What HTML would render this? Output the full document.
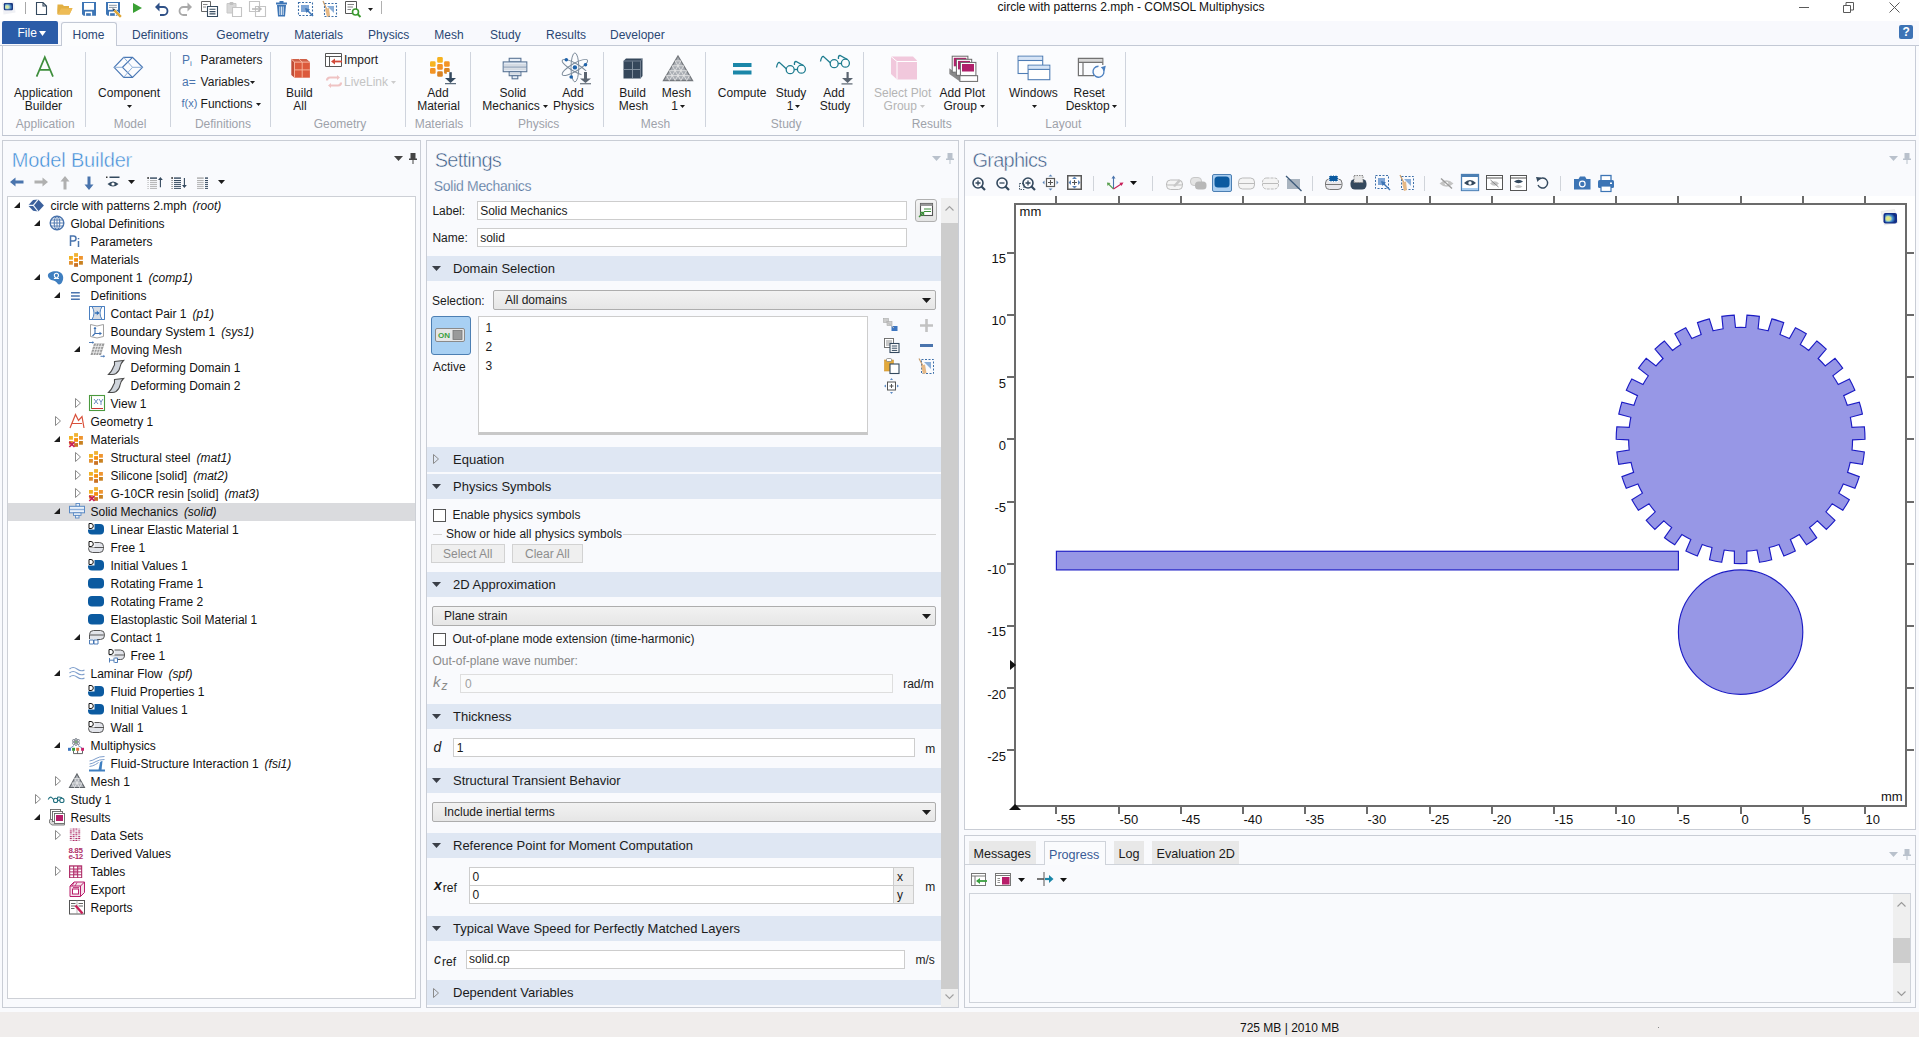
<!DOCTYPE html><html><head><meta charset="utf-8"><style>
html,body{margin:0;padding:0;width:1919px;height:1037px;overflow:hidden;background:#f9fafd;position:relative}
.t{position:absolute;white-space:nowrap;font-family:"Liberation Sans",sans-serif;line-height:1}
svg{overflow:visible}
</style></head><body><div style="position:absolute;left:0px;top:0px;width:1919px;height:21px;background:#ffffff"></div>
<div style="position:absolute;left:0px;top:21px;width:1919px;height:24px;background:#f8f9fd"></div>
<div style="position:absolute;left:0px;top:45px;width:1919px;height:1px;background:#c3c9d5"></div>
<div style="position:absolute;left:0px;top:46px;width:1919px;height:89px;background:#fbfcfe"></div>
<div style="position:absolute;left:2px;top:45px;width:1px;height:90px;background:#c8cdd8"></div>
<div style="position:absolute;left:1915px;top:45px;width:1px;height:90px;background:#c8cdd8"></div>
<div style="position:absolute;left:2px;top:135px;width:1914px;height:1px;background:#bfc5d1"></div>
<div style="position:absolute;left:0px;top:136px;width:1919px;height:876px;background:#f9fafd"></div>
<div style="position:absolute;left:0px;top:1012px;width:1919px;height:25px;background:#f0edec"></div>
<div style="position:absolute;left:2px;top:140px;width:419px;height:868px;background:#f9fafd;border:1px solid #c9cdd5;box-sizing:border-box"></div>
<div style="position:absolute;left:426px;top:140px;width:533px;height:868px;background:#f9fafd;border:1px solid #c9cdd5;box-sizing:border-box"></div>
<div style="position:absolute;left:964px;top:140px;width:952px;height:690px;background:#f9fafd;border:1px solid #c9cdd5;box-sizing:border-box"></div>
<div style="position:absolute;left:964px;top:835px;width:952px;height:173px;background:#f9fafd;border:1px solid #c9cdd5;box-sizing:border-box"></div>
<svg style="position:absolute;left:0px;top:0px;" width="17" height="17" viewBox="0 0 17 17"><path d="M2 2.5L14 1.5L15.5 12.5L3.5 14.5Z" fill="#eceef2" opacity="0.8"/><defs><radialGradient id="lg1" cx="0.3" cy="0.55" r="0.75"><stop offset="0" stop-color="#f2ec8a"/><stop offset="0.35" stop-color="#b9dcc0"/><stop offset="0.65" stop-color="#4e8cc6"/><stop offset="1" stop-color="#1a3c82"/></radialGradient></defs><rect x="3.8" y="3" width="9.2" height="7.2" rx="1.2" fill="#1c3a80"/><rect x="5" y="3.8" width="7.2" height="5.8" rx="0.8" fill="url(#lg1)"/></svg>
<div style="position:absolute;left:25px;top:2px;width:1px;height:12px;background:#a8a8a8"></div>
<svg style="position:absolute;left:35px;top:1px;" width="13" height="15" viewBox="0 0 13 15"><path d="M1.5 1.5H8L11.5 5V13.5H1.5Z M8 1.5V5H11.5" fill="#fff" stroke="#34495e" stroke-width="1.1"/></svg>
<svg style="position:absolute;left:57px;top:3px;" width="16" height="13" viewBox="0 0 16 13"><path d="M0.5 2V11.5H12.5L15.5 5H4L1.5 11" fill="#e3b043"/><path d="M0.5 11V1.5H5.5L7 3H12V5" fill="#e3b043" stroke="#d9a136" stroke-width="0"/><path d="M1 11.5L4 5.5H15.5L12.5 11.5Z" fill="#eebc56"/></svg>
<svg style="position:absolute;left:82px;top:2px;" width="14" height="14" viewBox="0 0 14 14"><path d="M0 0H14V13.8H1.6L0 12.2Z" fill="#3d75b5"/><rect x="2" y="1" width="10" height="6.8" fill="#fff"/><rect x="3" y="9.6" width="7.1" height="4.2" fill="#fff"/><rect x="4.1" y="11.2" width="4.7" height="2.6" fill="#3d75b5"/></svg>
<svg style="position:absolute;left:106px;top:2px;" width="16" height="16" viewBox="0 0 16 16"><path d="M0 0H14V13.8H1.6L0 12.2Z" fill="#3d75b5"/><rect x="2" y="1" width="10" height="6.8" fill="#fff"/><rect x="3" y="9.6" width="7.1" height="4.2" fill="#fff"/><rect x="4.1" y="11.2" width="4.7" height="2.6" fill="#3d75b5"/><path d="M3 3.3H10.8M3 5.4H10.8" stroke="#7a8a9a" stroke-width="0.9"/><path d="M9.3 7.3L16 14L14 16L7.3 9.3Z" fill="#e0a83a" stroke="#fff" stroke-width="0.5"/><path d="M6.3 6.3L9.3 7.3L7.3 9.3Z" fill="#34495e"/></svg>
<svg style="position:absolute;left:133px;top:3px;" width="10" height="10" viewBox="0 0 10 10"><path d="M0 0L9 5L0 10Z" fill="#3aa034"/></svg>
<svg style="position:absolute;left:155px;top:2px;" width="14" height="13" viewBox="0 0 14 13"><path d="M3 5H8.5A4 4 0 0 1 8.5 13H5" fill="none" stroke="#2f5187" stroke-width="1.8"/><path d="M0 5L4.5 0.5V9.5Z" fill="#2f5187"/></svg>
<svg style="position:absolute;left:178px;top:2px;" width="14" height="13" viewBox="0 0 14 13"><path d="M11 5H5.5A4 4 0 0 0 5.5 13H9" fill="none" stroke="#a9a9a9" stroke-width="1.8"/><path d="M14 5L9.5 0.5V9.5Z" fill="#a9a9a9"/></svg>
<svg style="position:absolute;left:201px;top:1px;" width="17" height="16" viewBox="0 0 17 16"><path d="M0.5 0.5H9.5V10.5H0.5Z" fill="#fff" stroke="#666" stroke-width="1"/><path d="M2 3.5H6.5M2 6H5" stroke="#777" stroke-width="0.9"/><path d="M6.5 5.5H16.5V15.5H6.5Z" fill="#fff" stroke="#34495e" stroke-width="1.1"/><path d="M8.5 8.3H14.5M8.5 10.6H14.5M8.5 12.9H14.5" stroke="#34495e" stroke-width="1.1"/></svg>
<svg style="position:absolute;left:226px;top:1px;" width="16" height="16" viewBox="0 0 16 16"><path d="M1 2.5H10V12H1Z" fill="#d8d8d8" stroke="#c8c8c8"/><rect x="3.5" y="1" width="4" height="3" rx="1" fill="#c0c0c0"/><path d="M6.5 6.5H15.5V15.5H6.5Z" fill="#fff" stroke="#c4c4c4" stroke-width="1.1"/></svg>
<svg style="position:absolute;left:249px;top:1px;" width="17" height="16" viewBox="0 0 17 16"><path d="M0.5 0.5H10.5V10.5H0.5Z M6.5 5.5H16.5V15.5H6.5Z" fill="none" stroke="#c4c4c4" stroke-width="1.1"/><path d="M3 8H11M9 5.5L12 8L9 10.5" fill="none" stroke="#b8b8b8" stroke-width="1.5"/></svg>
<svg style="position:absolute;left:276px;top:1px;" width="11" height="16" viewBox="0 0 11 16"><rect x="0" y="1.5" width="11" height="2" fill="#3d75b5"/><rect x="3.5" y="0" width="4" height="2" fill="#3d75b5"/><path d="M1 4H10L9 15.5H2Z" fill="#3d75b5"/><path d="M3.8 5.5V14M5.5 5.5V14M7.2 5.5V14" stroke="#fff" stroke-width="0.8"/></svg>
<svg style="position:absolute;left:298px;top:2px;" width="16" height="15" viewBox="0 0 16 15"><path d="M0.5 0.5H14.5V13.5H0.5Z" fill="none" stroke="#3d6fa8" stroke-width="1.1" stroke-dasharray="2 1.5"/><rect x="3" y="3" width="8" height="7" fill="#7fa6d6"/><path d="M8 7L15 14" stroke="#3d75b5" stroke-width="1.6"/><path d="M7 6L12 7.5L8.5 11Z" fill="#3d75b5"/></svg>
<svg style="position:absolute;left:322px;top:1px;" width="15" height="16" viewBox="0 0 15 16"><path d="M2.5 2.5H14.5V15.5H2.5Z" fill="none" stroke="#3d6fa8" stroke-width="1.1" stroke-dasharray="2 1.5"/><path d="M5 5H12V12Z" fill="#8aaed8"/><path d="M1 0L5 9" stroke="#c89c6a" stroke-width="1.2"/><path d="M3 8L7 7L8 15L5 16Z" fill="#e6b884"/></svg>
<svg style="position:absolute;left:345px;top:1px;" width="16" height="17" viewBox="0 0 16 17"><path d="M0.5 0.5H11.5V12.5H0.5Z" fill="#fff" stroke="#555" stroke-width="1"/><path d="M2.5 3.5H9M2.5 6H8M2.5 8.5H6" stroke="#777" stroke-width="0.9"/><circle cx="10.5" cy="11" r="3" fill="#fff" stroke="#3a9a2f" stroke-width="1.6"/><path d="M12.5 13L15.5 16" stroke="#3a9a2f" stroke-width="2"/></svg>
<svg style="position:absolute;left:368.0px;top:7.5px;" width="5" height="3" viewBox="0 0 5 3"><path d="M0 0H5L2.5 3Z" fill="#1b1b1b"/></svg>
<div style="position:absolute;left:381px;top:1px;width:1px;height:13px;background:#b0b0b0"></div>
<div class="t" style="left:997.5px;top:1px;font-size:12px;color:#111;">circle with patterns 2.mph - COMSOL Multiphysics</div>
<div style="position:absolute;left:1799px;top:7px;width:10px;height:1px;background:#5a5a5a"></div>
<svg style="position:absolute;left:1843px;top:2px;" width="11" height="11" viewBox="0 0 11 11"><path d="M0.5 3.5H7.5V10.5H0.5Z M3 3.5V0.5H10.5V8H7.5" fill="none" stroke="#5a5a5a" stroke-width="1"/></svg>
<svg style="position:absolute;left:1889px;top:2px;" width="11" height="11" viewBox="0 0 11 11"><path d="M0.5 0.5L10.5 10.5M10.5 0.5L0.5 10.5" stroke="#5a5a5a" stroke-width="1"/></svg>
<div style="position:absolute;left:2px;top:21px;width:56px;height:23px;background:#2b5ca8;border-radius:2px 2px 0 0"></div>
<div class="t" style="left:17.5px;top:27px;font-size:12px;color:#ffffff;">File</div>
<svg style="position:absolute;left:39px;top:31px;" width="7" height="5" viewBox="0 0 7 5"><path d="M0 0H7L3.5 5Z" fill="#fff"/></svg>
<div style="position:absolute;left:61px;top:22px;width:56px;height:24px;background:#fcfdfe;border:1px solid #c3c9d5;border-bottom:none;border-radius:3px 3px 0 0;box-sizing:border-box"></div>
<div class="t" style="left:72.5px;top:29px;font-size:12px;color:#2a4774;">Home</div>
<div class="t" style="left:132px;top:29px;font-size:12px;color:#2a4774;">Definitions</div>
<div class="t" style="left:216.3px;top:29px;font-size:12px;color:#2a4774;">Geometry</div>
<div class="t" style="left:294.3px;top:29px;font-size:12px;color:#2a4774;">Materials</div>
<div class="t" style="left:368px;top:29px;font-size:12px;color:#2a4774;">Physics</div>
<div class="t" style="left:434.3px;top:29px;font-size:12px;color:#2a4774;">Mesh</div>
<div class="t" style="left:490px;top:29px;font-size:12px;color:#2a4774;">Study</div>
<div class="t" style="left:546px;top:29px;font-size:12px;color:#2a4774;">Results</div>
<div class="t" style="left:610px;top:29px;font-size:12px;color:#2a4774;">Developer</div>
<div style="position:absolute;left:1899px;top:25px;width:14px;height:14px;background:#3d73b5;border-radius:2px"></div>
<div class="t" style="left:1902.5px;top:26px;font-size:12px;color:#fff;font-weight:bold">?</div>
<div style="position:absolute;left:85px;top:52px;width:1px;height:75px;background:#cfd4dd"></div>
<div style="position:absolute;left:170px;top:52px;width:1px;height:75px;background:#cfd4dd"></div>
<div style="position:absolute;left:270px;top:52px;width:1px;height:75px;background:#cfd4dd"></div>
<div style="position:absolute;left:405px;top:52px;width:1px;height:75px;background:#cfd4dd"></div>
<div style="position:absolute;left:470px;top:52px;width:1px;height:75px;background:#cfd4dd"></div>
<div style="position:absolute;left:603px;top:52px;width:1px;height:75px;background:#cfd4dd"></div>
<div style="position:absolute;left:705px;top:52px;width:1px;height:75px;background:#cfd4dd"></div>
<div style="position:absolute;left:863px;top:52px;width:1px;height:75px;background:#cfd4dd"></div>
<div style="position:absolute;left:997px;top:52px;width:1px;height:75px;background:#cfd4dd"></div>
<div style="position:absolute;left:1125px;top:52px;width:1px;height:75px;background:#cfd4dd"></div>
<div class="t" style="left:-104.8px;width:300px;text-align:center;top:118px;font-size:12px;color:#9ea2aa">Application</div>
<div class="t" style="left:-20px;width:300px;text-align:center;top:118px;font-size:12px;color:#9ea2aa">Model</div>
<div class="t" style="left:72.9px;width:300px;text-align:center;top:118px;font-size:12px;color:#9ea2aa">Definitions</div>
<div class="t" style="left:190px;width:300px;text-align:center;top:118px;font-size:12px;color:#9ea2aa">Geometry</div>
<div class="t" style="left:289px;width:300px;text-align:center;top:118px;font-size:12px;color:#9ea2aa">Materials</div>
<div class="t" style="left:388.70000000000005px;width:300px;text-align:center;top:118px;font-size:12px;color:#9ea2aa">Physics</div>
<div class="t" style="left:505.5px;width:300px;text-align:center;top:118px;font-size:12px;color:#9ea2aa">Mesh</div>
<div class="t" style="left:636.2px;width:300px;text-align:center;top:118px;font-size:12px;color:#9ea2aa">Study</div>
<div class="t" style="left:781.7px;width:300px;text-align:center;top:118px;font-size:12px;color:#9ea2aa">Results</div>
<div class="t" style="left:913.3px;width:300px;text-align:center;top:118px;font-size:12px;color:#9ea2aa">Layout</div>
<div class="t" style="left:-106.6px;width:300px;text-align:center;top:87px;font-size:12px;color:#1b1b1b">Application</div>
<div class="t" style="left:-106.6px;width:300px;text-align:center;top:100px;font-size:12px;color:#1b1b1b">Builder</div>
<div class="t" style="left:-20.900000000000006px;width:300px;text-align:center;top:87px;font-size:12px;color:#1b1b1b">Component</div>
<svg style="position:absolute;left:126.6px;top:104.8px;" width="5" height="3" viewBox="0 0 5 3"><path d="M0 0H5L2.5 3Z" fill="#1b1b1b"/></svg>
<div class="t" style="left:149.39999999999998px;width:300px;text-align:center;top:87px;font-size:12px;color:#1b1b1b">Build</div>
<div class="t" style="left:150px;width:300px;text-align:center;top:100px;font-size:12px;color:#1b1b1b">All</div>
<div class="t" style="left:287.9px;width:300px;text-align:center;top:87px;font-size:12px;color:#1b1b1b">Add</div>
<div class="t" style="left:288.5px;width:300px;text-align:center;top:100px;font-size:12px;color:#1b1b1b">Material</div>
<div class="t" style="left:362.9px;width:300px;text-align:center;top:87px;font-size:12px;color:#1b1b1b">Solid</div>
<div class="t" style="left:482.3px;top:100px;font-size:12px;color:#1b1b1b;">Mechanics</div>
<svg style="position:absolute;left:542.5px;top:105.0px;" width="5" height="3" viewBox="0 0 5 3"><path d="M0 0H5L2.5 3Z" fill="#1b1b1b"/></svg>
<div class="t" style="left:423px;width:300px;text-align:center;top:87px;font-size:12px;color:#1b1b1b">Add</div>
<div class="t" style="left:423.6px;width:300px;text-align:center;top:100px;font-size:12px;color:#1b1b1b">Physics</div>
<div class="t" style="left:482.5px;width:300px;text-align:center;top:87px;font-size:12px;color:#1b1b1b">Build</div>
<div class="t" style="left:483.4px;width:300px;text-align:center;top:100px;font-size:12px;color:#1b1b1b">Mesh</div>
<div class="t" style="left:526.5px;width:300px;text-align:center;top:87px;font-size:12px;color:#1b1b1b">Mesh</div>
<div class="t" style="left:671.2px;top:100px;font-size:12px;color:#1b1b1b;">1</div>
<svg style="position:absolute;left:680.0px;top:105.0px;" width="5" height="3" viewBox="0 0 5 3"><path d="M0 0H5L2.5 3Z" fill="#1b1b1b"/></svg>
<div class="t" style="left:592.2px;width:300px;text-align:center;top:87px;font-size:12px;color:#1b1b1b">Compute</div>
<div class="t" style="left:641px;width:300px;text-align:center;top:87px;font-size:12px;color:#1b1b1b">Study</div>
<div class="t" style="left:786.8px;top:100px;font-size:12px;color:#1b1b1b;">1</div>
<svg style="position:absolute;left:795.0px;top:105.0px;" width="5" height="3" viewBox="0 0 5 3"><path d="M0 0H5L2.5 3Z" fill="#1b1b1b"/></svg>
<div class="t" style="left:684px;width:300px;text-align:center;top:87px;font-size:12px;color:#1b1b1b">Add</div>
<div class="t" style="left:685px;width:300px;text-align:center;top:100px;font-size:12px;color:#1b1b1b">Study</div>
<div class="t" style="left:752.7px;width:300px;text-align:center;top:87px;font-size:12px;color:#b4b4b4">Select Plot</div>
<div class="t" style="left:883.6px;top:100px;font-size:12px;color:#b4b4b4;">Group</div>
<svg style="position:absolute;left:919.9px;top:105.0px;" width="5" height="3" viewBox="0 0 5 3"><path d="M0 0H5L2.5 3Z" fill="#c8c8c8"/></svg>
<div class="t" style="left:812.3px;width:300px;text-align:center;top:87px;font-size:12px;color:#1b1b1b">Add Plot</div>
<div class="t" style="left:943.5px;top:100px;font-size:12px;color:#1b1b1b;">Group</div>
<svg style="position:absolute;left:980.1px;top:105.0px;" width="5" height="3" viewBox="0 0 5 3"><path d="M0 0H5L2.5 3Z" fill="#1b1b1b"/></svg>
<div class="t" style="left:883.4000000000001px;width:300px;text-align:center;top:87px;font-size:12px;color:#1b1b1b">Windows</div>
<svg style="position:absolute;left:1031.9px;top:105.0px;" width="5" height="3" viewBox="0 0 5 3"><path d="M0 0H5L2.5 3Z" fill="#1b1b1b"/></svg>
<div class="t" style="left:939.3px;width:300px;text-align:center;top:87px;font-size:12px;color:#1b1b1b">Reset</div>
<div class="t" style="left:1065.7px;top:100px;font-size:12px;color:#1b1b1b;">Desktop</div>
<svg style="position:absolute;left:1112.1px;top:105.0px;" width="5" height="3" viewBox="0 0 5 3"><path d="M0 0H5L2.5 3Z" fill="#1b1b1b"/></svg>
<div class="t" style="left:200.6px;top:54px;font-size:12px;color:#1b1b1b;">Parameters</div>
<div class="t" style="left:200.6px;top:76px;font-size:12px;color:#1b1b1b;">Variables</div>
<svg style="position:absolute;left:249.9px;top:80.5px;" width="5" height="3" viewBox="0 0 5 3"><path d="M0 0H5L2.5 3Z" fill="#1b1b1b"/></svg>
<div class="t" style="left:200.6px;top:98px;font-size:12px;color:#1b1b1b;">Functions</div>
<svg style="position:absolute;left:256.0px;top:102.5px;" width="5" height="3" viewBox="0 0 5 3"><path d="M0 0H5L2.5 3Z" fill="#1b1b1b"/></svg>
<div class="t" style="left:344px;top:54px;font-size:12px;color:#1b1b1b;">Import</div>
<div class="t" style="left:344px;top:76px;font-size:12px;color:#c4c4c4;">LiveLink</div>
<svg style="position:absolute;left:390.5px;top:80.5px;" width="5" height="3" viewBox="0 0 5 3"><path d="M0 0H5L2.5 3Z" fill="#cccccc"/></svg>
<svg style="position:absolute;left:30px;top:52px;" width="30" height="30" viewBox="0 0 30 30"><path d="M6.6 24.6L14.8 5.2L23 24.6M9.4 17.8H20.3" fill="none" stroke="#3e8e3c" stroke-width="1.7"/></svg>
<svg style="position:absolute;left:110px;top:52px;" width="36" height="30" viewBox="0 0 36 30"><g fill="none" stroke="#4a78b5" stroke-width="1.2"><path d="M4.1 15.3L13.7 5.3H22.5L32.5 15.3L22.5 25.3H13.7Z"/><path d="M22.5 5.3L12.5 15.3L22.5 25.3"/></g><g fill="none" stroke="#8fb0d8" stroke-width="1"><path d="M13.7 5.3L22.5 15.3L13.7 25.3M4.1 15.3H12.5M22.5 15.3H32.5"/></g></svg>
<div class="t" style="left:182px;top:54px;font-size:12px;color:#4a74ad;">P<sub style="font-size:8px;vertical-align:-2px">i</sub></div>
<div class="t" style="left:182px;top:76px;font-size:12px;color:#4a74ad;">a=</div>
<div class="t" style="left:181.5px;top:98px;font-size:11px;color:#4a74ad;">f(x)</div>
<svg style="position:absolute;left:290px;top:58px;" width="21" height="21" viewBox="0 0 21 21"><path d="M1.3 1H16.5L19.9 4.1H4.5Z" fill="#d06048"/><path d="M1.3 1L4.5 4.1V19.7L1.3 17Z" fill="#c04e38"/><rect x="4.5" y="4.1" width="15.4" height="15.6" fill="#dc5a3c"/><path d="M4.5 4.1H19.9M12.2 4.1V19.7M4.5 11.9H19.9M4.5 4.1V19.7M8.9 1L12.2 4.1M1.3 1L4.5 4.1" stroke="#f8b8a0" stroke-width="0.9" fill="none"/></svg>
<svg style="position:absolute;left:325px;top:53px;" width="18" height="14" viewBox="0 0 18 14"><path d="M0.5 0.5H16.5V13.5H0.5Z M0.5 3.5H16.5 M4.5 3.5V13.5" fill="#fff" stroke="#555" stroke-width="1"/><path d="M8 8.5H17" stroke="#d24a3a" stroke-width="1.8"/><path d="M6 8.5L10 5.5V11.5Z" fill="#d24a3a"/></svg>
<svg style="position:absolute;left:325px;top:75px;" width="18" height="13" viewBox="0 0 18 13"><path d="M2 5.5A3 3 0 0 1 5 2.5H13M16 7.5A3 3 0 0 1 13 10.5H5" fill="none" stroke="#efc3c3" stroke-width="2.2"/><path d="M12 0L15 2.5L12 5Z M6 8L3 10.5L6 13Z" fill="#efc3c3"/></svg>
<svg style="position:absolute;left:429px;top:56px;" width="31" height="29" viewBox="0 0 31 29"><rect x="8.2" y="1.1" width="5.6" height="5.6" rx="1.3" fill="#f6b21e"/><rect x="1" y="5.2" width="5.6" height="5.6" rx="1.3" fill="#f6b420"/><rect x="15.1" y="5.2" width="5.6" height="5.6" rx="1.3" fill="#f39425"/><rect x="8.2" y="8.1" width="5.6" height="5.6" rx="1.3" fill="#f39024"/><rect x="1" y="12.1" width="5.6" height="5.6" rx="1.3" fill="#f39424"/><rect x="15.1" y="12.1" width="5.6" height="5.6" rx="1.3" fill="#dc8420"/><rect x="8.2" y="15.2" width="5.6" height="5.6" rx="1.3" fill="#d98222"/><path d="M20.2 16H17.8V27H31V16Z" fill="#fbfcfe"/><rect x="20.3" y="16.2" width="2.5" height="7" fill="#34495e"/><path d="M16 22H27L21.5 27Z" fill="#34495e"/><rect x="16" y="27.2" width="11" height="1" fill="#34495e"/></svg>
<svg style="position:absolute;left:502px;top:57px;" width="26" height="23" viewBox="0 0 26 23"><g stroke="#5a7495" stroke-width="1.1" fill="#e8eff8"><rect x="7.2" y="1.3" width="11.7" height="3.6"/><rect x="1.2" y="4.9" width="23.6" height="9.8"/><rect x="7.2" y="14.7" width="11.7" height="4"/><rect x="10.1" y="18.7" width="5.7" height="3.1"/></g><rect x="1.8" y="6.8" width="22.4" height="2.2" fill="#d5dbe3"/><rect x="1.8" y="9.3" width="22.4" height="1.6" fill="#a3b1c2"/><rect x="1.8" y="11.2" width="22.4" height="2" fill="#d5dbe3"/><rect x="7.8" y="15.8" width="10.5" height="1.8" fill="#d5dbe3"/></svg>
<svg style="position:absolute;left:560px;top:52px;" width="33" height="33" viewBox="0 0 33 33"><g fill="none" stroke="#7d8c9c" stroke-width="1"><ellipse cx="14.9" cy="15.4" rx="3.9" ry="14.5"/><ellipse cx="14.9" cy="15.4" rx="3.9" ry="14.5" transform="rotate(60 14.9 15.4)"/><ellipse cx="14.9" cy="15.4" rx="3.9" ry="14.5" transform="rotate(-60 14.9 15.4)"/></g><circle cx="14.9" cy="15.4" r="2.2" fill="#1f63aa"/><circle cx="6.3" cy="7.8" r="1.8" fill="#1f63aa"/><circle cx="25.5" cy="12.8" r="1.8" fill="#1f63aa"/><circle cx="11.2" cy="25" r="1.8" fill="#1f63aa"/><path d="M22.5 19H31.5V32H19Z" fill="#fbfcfe"/><rect x="24" y="20" width="3" height="7" fill="#5a6470"/><path d="M20 26.5H31L25.5 31Z" fill="#5a6470"/><rect x="20" y="31.2" width="11" height="1.1" fill="#5a6470"/></svg>
<svg style="position:absolute;left:623px;top:58px;" width="21" height="21" viewBox="0 0 21 21"><path d="M3 0.5H19.5V18L17.5 20.5H0.5V3Z" fill="#35475b"/><path d="M0.5 3H17.5V20.5 M17.5 3L19.5 0.5" fill="none" stroke="#8a97a6" stroke-width="0.7"/><path d="M1 11.5H17M9.5 3.5V20" stroke="#8a97a6" stroke-width="0.9"/></svg>
<svg style="position:absolute;left:663px;top:55px;" width="30" height="27" viewBox="0 0 30 27"><path d="M15 1L29.5 25.5H0.5Z" fill="#a9adb3" stroke="#74787d" stroke-width="1.3"/><path d="M12.1 5.9H17.9 M6.3 25.5L17.9 5.9" stroke="#e8e8e8" stroke-width="0.8"/><path d="M9.2 10.8H20.8 M12.1 25.5L20.8 10.8" stroke="#e8e8e8" stroke-width="0.8"/><path d="M6.3 15.7H23.7 M17.9 25.5L23.7 15.7" stroke="#e8e8e8" stroke-width="0.8"/><path d="M3.4 20.6H26.6 M23.7 25.5L26.6 20.6" stroke="#e8e8e8" stroke-width="0.8"/><path d="M23.7 25.5L12.1 5.9" stroke="#e8e8e8" stroke-width="0.8"/><path d="M17.9 25.5L9.2 10.8" stroke="#e8e8e8" stroke-width="0.8"/><path d="M12.1 25.5L6.3 15.7" stroke="#e8e8e8" stroke-width="0.8"/><path d="M6.3 25.5L3.4 20.6" stroke="#e8e8e8" stroke-width="0.8"/></svg>
<svg style="position:absolute;left:733px;top:63px;" width="19" height="12" viewBox="0 0 19 12"><rect x="0" y="0" width="18.5" height="4" fill="#1a86a8"/><rect x="0" y="7.5" width="18.5" height="4" fill="#1a86a8"/></svg>
<svg style="position:absolute;left:776px;top:59px;" width="31" height="16" viewBox="0 0 31 16"><g fill="none" stroke="#1f7d90" stroke-width="1.3"><path d="M0.5 8.5Q1.5 3 3.5 3.5L10.5 10"/><circle cx="14.2" cy="10.7" r="4"/><circle cx="25.4" cy="10.2" r="4"/><path d="M18.2 10.5H21.4"/><path d="M18.5 6Q18 2.5 20 2.5L27.5 6.5"/></g></svg>
<svg style="position:absolute;left:820px;top:53px;" width="31" height="16" viewBox="0 0 31 16"><g fill="none" stroke="#1f7d90" stroke-width="1.3"><path d="M0.5 8.5Q1.5 3 3.5 3.5L10.5 10"/><circle cx="14.2" cy="10.7" r="4"/><circle cx="25.4" cy="10.2" r="4"/><path d="M18.2 10.5H21.4"/><path d="M18.5 6Q18 2.5 20 2.5L27.5 6.5"/></g></svg>
<svg style="position:absolute;left:820px;top:53px;" width="33" height="33" viewBox="0 0 33 33"><rect x="26.5" y="19" width="2.2" height="7" fill="#5a6470"/><path d="M22 25H33L27.6 30Z" fill="#5a6470"/><rect x="21.5" y="30.3" width="11" height="1.2" fill="#5a6470"/></svg>
<svg style="position:absolute;left:890px;top:55px;" width="28" height="26" viewBox="0 0 28 26"><path d="M1 1.5H23L27 5.5V24.5H7L1 19Z" fill="#f1c8dc"/><path d="M1 1.5L7 6.5H27 M7 6.5V24.5" fill="none" stroke="#fff" stroke-width="1"/></svg>
<svg style="position:absolute;left:948px;top:55px;" width="31" height="28" viewBox="0 0 31 28"><path d="M1.3 13.2L11.9 20.7V26.4L1.3 18.9Z" fill="#8a8a8a"/><rect x="4.2" y="1.2" width="15.7" height="16" fill="#fff" stroke="#6a6a6a" stroke-width="1"/><rect x="5.8" y="2.8" width="12.5" height="8.5" fill="#b0206a"/><rect x="8.4" y="4.3" width="15.3" height="16" fill="#fff" stroke="#6a6a6a" stroke-width="1"/><rect x="10" y="5.9" width="12" height="8.5" fill="#b0206a"/><rect x="12.4" y="7.4" width="15.5" height="13.3" fill="#fff" stroke="#6a6a6a" stroke-width="1"/><rect x="14" y="9" width="12" height="7.5" fill="#b0206a"/><rect x="11.9" y="20.7" width="17.7" height="5.7" fill="#fff" stroke="#6a6a6a" stroke-width="1"/></svg>
<svg style="position:absolute;left:1017px;top:55px;" width="34" height="26" viewBox="0 0 34 26"><rect x="1.1" y="1.2" width="24.6" height="17.3" fill="#fff" stroke="#4f7db5" stroke-width="1.1"/><rect x="1.7" y="1.8" width="23.4" height="3.5" fill="#d6e4f6"/><path d="M1.1 5.5H25.7" stroke="#4f7db5" stroke-width="1.1"/><rect x="11.1" y="10.2" width="21.7" height="14.5" fill="#fff" stroke="#4f7db5" stroke-width="1.1"/><rect x="11.7" y="10.8" width="20.5" height="3.3" fill="#d6e4f6"/><path d="M11.1 14.4H32.8" stroke="#4f7db5" stroke-width="1.1"/></svg>
<svg style="position:absolute;left:1077px;top:57px;" width="30" height="22" viewBox="0 0 30 22"><path d="M17 18.7H1.4V1.4H25.8V8" fill="none" stroke="#727272" stroke-width="1.2"/><rect x="2" y="2" width="23.2" height="3.3" fill="#d6d6d6"/><path d="M1.4 5.3H25.8M6 5.3V18.7" stroke="#727272" stroke-width="1.2"/><path d="M21.5 9.2A5.5 5.5 0 1 0 26.3 12" fill="none" stroke="#4a7fbf" stroke-width="1.4"/><path d="M23.8 10.2L28.8 8.8L27.6 14Z" fill="#4a7fbf"/></svg>
<div class="t" style="left:11.8px;top:150px;font-size:20px;color:#3c8ad6;letter-spacing:-0.15px;-webkit-text-stroke:0.45px #f9fafd">Model Builder</div>
<svg style="position:absolute;left:394px;top:156px;" width="9" height="5" viewBox="0 0 9 5"><path d="M0 0H9L4.5 5Z" fill="#444"/></svg>
<svg style="position:absolute;left:409px;top:153px;" width="8" height="11" viewBox="0 0 8 11"><rect x="1.5" y="0" width="5" height="6" fill="#444"/><rect x="0" y="5.5" width="8" height="1.5" fill="#444"/><rect x="3.5" y="7" width="1" height="4" fill="#444"/></svg>
<svg style="position:absolute;left:10px;top:177px;" width="14" height="10" viewBox="0 0 14 10"><path d="M0 5L5.5 0.5V3.5H13.5V6.5H5.5V9.5Z" fill="#4a74ad"/></svg>
<svg style="position:absolute;left:34px;top:177px;" width="14" height="10" viewBox="0 0 14 10"><path d="M14 5L8.5 0.5V3.5H0.5V6.5H8.5V9.5Z" fill="#b0b0b0"/></svg>
<svg style="position:absolute;left:60px;top:176px;" width="10" height="14" viewBox="0 0 10 14"><path d="M5 0L9.5 5.5H6.5V13.5H3.5V5.5H0.5Z" fill="#b0b0b0"/></svg>
<svg style="position:absolute;left:84px;top:176px;" width="10" height="14" viewBox="0 0 10 14"><path d="M5 14L9.5 8.5H6.5V0.5H3.5V8.5H0.5Z" fill="#4a74ad"/></svg>
<svg style="position:absolute;left:106px;top:176px;" width="14" height="13" viewBox="0 0 14 13"><rect x="0" y="0.5" width="1.5" height="1.5" fill="#333"/><rect x="3.5" y="0.5" width="10" height="1.5" fill="#34495e"/><path d="M1.5 8Q7 3 12.5 8Q7 13 1.5 8Z" fill="#34495e"/><circle cx="7" cy="8" r="1.6" fill="#fff"/></svg>
<svg style="position:absolute;left:127.5px;top:180px;" width="7" height="4" viewBox="0 0 7 4"><path d="M0 0H7L3.5 4Z" fill="#1b1b1b"/></svg>
<svg style="position:absolute;left:140px;top:170px;" width="70" height="20" viewBox="0 0 70 20"><rect x="7.3" y="7.2" width="1.6" height="1.6" fill="#222"/><rect x="7.6" y="10.1" width="0.9" height="0.9" fill="#999"/><rect x="7.6" y="12.0" width="0.9" height="0.9" fill="#999"/><rect x="7.6" y="14.0" width="0.9" height="0.9" fill="#999"/><rect x="7.6" y="16.0" width="0.9" height="0.9" fill="#999"/><rect x="7.6" y="18.0" width="0.9" height="0.9" fill="#999"/><path d="M10 8.1H17" stroke="#34495e" stroke-width="1.4"/><path d="M10 10.5H17" stroke="#aaa" stroke-width="0.9"/><path d="M10 12.4H17" stroke="#aaa" stroke-width="0.9"/><path d="M10 14.4H17" stroke="#aaa" stroke-width="0.9"/><path d="M10 16.4H17" stroke="#aaa" stroke-width="0.9"/><path d="M10 18.4H17" stroke="#aaa" stroke-width="0.9"/><path d="M20.4 17.2V8.5" stroke="#34495e" stroke-width="1.1"/><path d="M18 10L20.4 7L22.8 10Z" fill="#34495e"/><rect x="31.3" y="7.2" width="1.6" height="1.6" fill="#222"/><rect x="31.6" y="10.1" width="0.9" height="0.9" fill="#333"/><rect x="31.6" y="12.0" width="0.9" height="0.9" fill="#333"/><rect x="31.6" y="14.0" width="0.9" height="0.9" fill="#333"/><rect x="31.6" y="16.0" width="0.9" height="0.9" fill="#333"/><rect x="31.6" y="18.0" width="0.9" height="0.9" fill="#333"/><path d="M34 8.1H41" stroke="#34495e" stroke-width="1.4"/><path d="M34 10.5H41" stroke="#34495e" stroke-width="1.0"/><path d="M34 12.4H41" stroke="#34495e" stroke-width="1.0"/><path d="M34 14.4H41" stroke="#34495e" stroke-width="1.0"/><path d="M34 16.4H41" stroke="#34495e" stroke-width="1.0"/><path d="M34 18.4H41" stroke="#34495e" stroke-width="1.0"/><path d="M44.4 8V16.5" stroke="#34495e" stroke-width="1.1"/><path d="M42 15L44.4 18L46.8 15Z" fill="#34495e"/><path d="M57 8.1H63.69999999999999" stroke="#aaa" stroke-width="1.4"/><path d="M57 10.5H63.69999999999999" stroke="#aaa" stroke-width="0.9"/><path d="M57 12.4H63.69999999999999" stroke="#aaa" stroke-width="0.9"/><path d="M57 14.4H63.69999999999999" stroke="#aaa" stroke-width="0.9"/><path d="M57 16.4H63.69999999999999" stroke="#aaa" stroke-width="0.9"/><path d="M57 18.4H63.69999999999999" stroke="#aaa" stroke-width="0.9"/><path d="M65 8.1H68" stroke="#34495e" stroke-width="1.4"/><path d="M65 10.5H68" stroke="#34495e" stroke-width="1.0"/><path d="M65 12.4H68" stroke="#34495e" stroke-width="1.0"/><path d="M65 14.4H68" stroke="#34495e" stroke-width="1.0"/><path d="M65 16.4H68" stroke="#34495e" stroke-width="1.0"/><path d="M65 18.4H68" stroke="#34495e" stroke-width="1.0"/></svg>
<svg style="position:absolute;left:218px;top:180px;" width="7" height="4" viewBox="0 0 7 4"><path d="M0 0H7L3.5 4Z" fill="#1b1b1b"/></svg>
<div style="position:absolute;left:7px;top:196px;width:409px;height:803px;background:#ffffff;border:1px solid #cdd0d6;box-sizing:border-box"></div>
<div style="position:absolute;left:8px;top:503px;width:407px;height:18px;background:#dadbde"></div>
<div class="t" style="left:50.5px;top:200px;font-size:12px;color:#111;">circle with patterns 2.mph</div>
<div class="t" style="left:192.5546875px;top:200px;font-size:12px;color:#111;font-style:italic">(root)</div>
<svg style="position:absolute;left:29px;top:197px;" width="16" height="16" viewBox="0 0 16 16"><path d="M-0.9 8.4L4.1 2.9L9.3 2.6L14.9 8.4L9.3 14.4L4.1 13.8Z" fill="#3b609c"/><path d="M-1 8.4H4.3L9.4 2.2M4.3 8.4L9.4 14.8" fill="none" stroke="#f4f8fd" stroke-width="1.1"/></svg>
<svg style="position:absolute;left:14px;top:202px;" width="6" height="6" viewBox="0 0 6 6"><path d="M6 0V6H0Z" fill="#1b1b1b"/></svg>
<div class="t" style="left:70.5px;top:218px;font-size:12px;color:#111;">Global Definitions</div>
<svg style="position:absolute;left:49px;top:215px;" width="16" height="16" viewBox="0 0 16 16"><circle cx="8" cy="8" r="6.8" fill="#fff" stroke="#4a74ad" stroke-width="1.4"/><ellipse cx="8" cy="8" rx="2.8" ry="6.8" fill="none" stroke="#4a74ad" stroke-width="1"/><path d="M1.2 8H14.8M2 5H14M2 11H14M8 1.2V14.8" stroke="#4a74ad" stroke-width="0.9"/></svg>
<svg style="position:absolute;left:34px;top:220px;" width="6" height="6" viewBox="0 0 6 6"><path d="M6 0V6H0Z" fill="#1b1b1b"/></svg>
<div class="t" style="left:90.5px;top:236px;font-size:12px;color:#111;">Parameters</div>
<svg style="position:absolute;left:69px;top:233px;" width="16" height="16" viewBox="0 0 16 16"><path d="M1.5 13V3H4.5Q7 3 7 5.5T4.5 8H1.5" fill="none" stroke="#4a74ad" stroke-width="1.5"/><path d="M9.5 8V14M9.5 5V6.3" stroke="#4a74ad" stroke-width="1.5"/></svg>
<div class="t" style="left:90.5px;top:254px;font-size:12px;color:#111;">Materials</div>
<svg style="position:absolute;left:69px;top:251px;" width="16" height="16" viewBox="0 0 16 16"><rect x="5.1" y="2.1" width="3.9" height="3.7" fill="#f0b232"/><rect x="0" y="5" width="3.9" height="3.7" fill="#f1b224"/><rect x="10" y="5" width="3.9" height="3.7" fill="#ef9530"/><rect x="5.1" y="7.1" width="3.9" height="3.7" fill="#f5900f"/><rect x="0" y="10" width="3.9" height="3.7" fill="#e29232"/><rect x="10" y="10" width="3.9" height="3.7" fill="#c98222"/><rect x="5.1" y="12.1" width="3.9" height="3.7" fill="#c97224"/></svg>
<div class="t" style="left:70.5px;top:272px;font-size:12px;color:#111;">Component 1</div>
<div class="t" style="left:148.546875px;top:272px;font-size:12px;color:#111;font-style:italic">(comp1)</div>
<svg style="position:absolute;left:49px;top:269px;" width="16" height="16" viewBox="0 0 16 16"><path d="M6.5 2.3C10.8 2.2 14.2 4.6 14.2 8.6C14.2 11 13.6 12.6 12.6 14.1C11.5 15.7 9.5 16 8.5 14.6C7.6 13.3 6.5 12.2 4.5 11.6C1.5 10.9 -1.1 9.2 -1.1 6.5C-1.1 4 2.4 2.4 6.5 2.3Z" fill="#3f7fc0"/><path d="M4.9 9.5H6.8V8.7Q5.3 7.9 5.3 6.3Q5.3 4.2 7.4 4.2T9.5 6.3Q9.5 7.9 8 8.7V9.5H9.9" fill="none" stroke="#fff" stroke-width="1.1"/></svg>
<svg style="position:absolute;left:34px;top:274px;" width="6" height="6" viewBox="0 0 6 6"><path d="M6 0V6H0Z" fill="#1b1b1b"/></svg>
<div class="t" style="left:90.5px;top:290px;font-size:12px;color:#111;">Definitions</div>
<svg style="position:absolute;left:69px;top:287px;" width="16" height="16" viewBox="0 0 16 16"><path d="M2 5.8H10.8M2 9H10.8M2 12.2H10.8" stroke="#4a74ad" stroke-width="1.6"/></svg>
<svg style="position:absolute;left:54px;top:292px;" width="6" height="6" viewBox="0 0 6 6"><path d="M6 0V6H0Z" fill="#1b1b1b"/></svg>
<div class="t" style="left:110.5px;top:308px;font-size:12px;color:#111;">Contact Pair 1</div>
<div class="t" style="left:192.537109375px;top:308px;font-size:12px;color:#111;font-style:italic">(p1)</div>
<svg style="position:absolute;left:89px;top:305px;" width="16" height="16" viewBox="0 0 16 16"><path d="M0.5 1.5H15.5V14.5H0.5Z" fill="#d8dde4" stroke="#4a7fc0" stroke-width="1"/><path d="M3 1.5Q7 8 3 14.5H0.5V1.5Z M13 1.5Q9 8 13 14.5H15.5V1.5Z" fill="#fff" stroke="#4a7fc0" stroke-width="1"/><path d="M6 8H10" stroke="#2f6db5" stroke-width="1.4"/><path d="M7.8 5.5L10 8L7.8 10.5Z" fill="#2f6db5"/></svg>
<div class="t" style="left:110.5px;top:326px;font-size:12px;color:#111;">Boundary System 1</div>
<div class="t" style="left:221.21875px;top:326px;font-size:12px;color:#111;font-style:italic">(sys1)</div>
<svg style="position:absolute;left:89px;top:323px;" width="16" height="16" viewBox="0 0 16 16"><path d="M1.5 1.5Q8 4.5 14.5 1.5V13.5Q8 16.5 1.5 13.5Z" fill="#fff" stroke="#a0a0a0" stroke-width="1"/><path d="M6 4.5V10.5L3.5 13M6 10.5H11" fill="none" stroke="#3d6fb0" stroke-width="1.1"/><path d="M10.5 8.8L13 10.5L10.5 12.2Z M4.5 6L6 3.8L7.5 6Z" fill="#3d6fb0"/></svg>
<div class="t" style="left:110.5px;top:344px;font-size:12px;color:#111;">Moving Mesh</div>
<svg style="position:absolute;left:89px;top:341px;" width="16" height="16" viewBox="0 0 16 16"><path d="M5 2.5H15.5L12 14H1.5Z" fill="#9a9a9a"/><path d="M4.1 5.4H14.6M3.2 8.3H13.7M2.3 11.2H12.8M7.6 2.5L4.1 14M10.2 2.5L6.7 14M12.9 2.5L9.4 14" stroke="#f4f4f4" stroke-width="0.8"/><path d="M0 1.5H4" stroke="#3d6fb0" stroke-width="0.9"/><path d="M3.5 0L5 1.5L3.5 3Z" fill="#3d6fb0"/><path d="M11.5 15.3H15" stroke="#3d6fb0" stroke-width="0.9"/><path d="M14.5 13.8L16 15.3L14.5 16.8Z" fill="#3d6fb0"/></svg>
<svg style="position:absolute;left:74px;top:346px;" width="6" height="6" viewBox="0 0 6 6"><path d="M6 0V6H0Z" fill="#1b1b1b"/></svg>
<div class="t" style="left:130.5px;top:362px;font-size:12px;color:#111;">Deforming Domain 1</div>
<svg style="position:absolute;left:109px;top:359px;" width="16" height="16" viewBox="0 0 16 16"><path d="M5.5 2.5L14.5 1.5Q11.5 4.5 11 8Q10.5 12 7 14.5Q5.5 15.5 3 15.5H-0.5Q2.5 12.5 3.5 10Q4.5 7.5 5.5 6Z" fill="#d0d5dc" stroke="#4a4a4a" stroke-width="1.1"/></svg>
<div class="t" style="left:130.5px;top:380px;font-size:12px;color:#111;">Deforming Domain 2</div>
<svg style="position:absolute;left:109px;top:377px;" width="16" height="16" viewBox="0 0 16 16"><path d="M5.5 2.5L14.5 1.5Q11.5 4.5 11 8Q10.5 12 7 14.5Q5.5 15.5 3 15.5H-0.5Q2.5 12.5 3.5 10Q4.5 7.5 5.5 6Z" fill="#d0d5dc" stroke="#4a4a4a" stroke-width="1.1"/></svg>
<div class="t" style="left:110.5px;top:398px;font-size:12px;color:#111;">View 1</div>
<svg style="position:absolute;left:89px;top:395px;" width="16" height="16" viewBox="0 0 16 16"><rect x="0.5" y="0.5" width="15" height="15" fill="#fff" stroke="#4b9a3f" stroke-width="1.1"/><path d="M2.5 1.5V13.5H14" fill="none" stroke="#c33" stroke-width="1"/><path d="M2.5 1.5V13.5" stroke="#4b9a3f" stroke-width="1"/><path d="M5 4L9 9M9 4L5 9M10 4L12 7L14 4M12 7V10" fill="none" stroke="#5a7fb5" stroke-width="0.9"/></svg>
<svg style="position:absolute;left:75px;top:398px;" width="6" height="10" viewBox="0 0 6 10"><path d="M0.5 0.5L5.5 5L0.5 9.5Z" fill="#fff" stroke="#8a8a8a" stroke-width="1"/></svg>
<div class="t" style="left:90.5px;top:416px;font-size:12px;color:#111;">Geometry 1</div>
<svg style="position:absolute;left:69px;top:413px;" width="16" height="16" viewBox="0 0 16 16"><path d="M1 15L6.5 1.5L9.5 7.5L13 3.5L15 15" fill="none" stroke="#d9503a" stroke-width="1.2"/><path d="M3 10.5H13" stroke="#d9503a" stroke-width="1"/></svg>
<svg style="position:absolute;left:55px;top:416px;" width="6" height="10" viewBox="0 0 6 10"><path d="M0.5 0.5L5.5 5L0.5 9.5Z" fill="#fff" stroke="#8a8a8a" stroke-width="1"/></svg>
<div class="t" style="left:90.5px;top:434px;font-size:12px;color:#111;">Materials</div>
<svg style="position:absolute;left:69px;top:431px;" width="16" height="16" viewBox="0 0 16 16"><rect x="5.1" y="2.1" width="3.9" height="3.7" fill="#f0b232"/><rect x="0" y="5" width="3.9" height="3.7" fill="#f1b224"/><rect x="10" y="5" width="3.9" height="3.7" fill="#ef9530"/><rect x="5.1" y="7.1" width="3.9" height="3.7" fill="#f5900f"/><rect x="0" y="10" width="3.9" height="3.7" fill="#e29232"/><rect x="10" y="10" width="3.9" height="3.7" fill="#c98222"/><rect x="5.1" y="12.1" width="3.9" height="3.7" fill="#c97224"/><path d="M0.3 10.8L5.5 16M5.5 10.8L0.3 16" stroke="#c8205a" stroke-width="1.7"/></svg>
<svg style="position:absolute;left:54px;top:436px;" width="6" height="6" viewBox="0 0 6 6"><path d="M6 0V6H0Z" fill="#1b1b1b"/></svg>
<div class="t" style="left:110.5px;top:452px;font-size:12px;color:#111;">Structural steel</div>
<div class="t" style="left:196.533203125px;top:452px;font-size:12px;color:#111;font-style:italic">(mat1)</div>
<svg style="position:absolute;left:89px;top:449px;" width="16" height="16" viewBox="0 0 16 16"><rect x="5.1" y="2.1" width="3.9" height="3.7" fill="#f0b232"/><rect x="0" y="5" width="3.9" height="3.7" fill="#f1b224"/><rect x="10" y="5" width="3.9" height="3.7" fill="#ef9530"/><rect x="5.1" y="7.1" width="3.9" height="3.7" fill="#f5900f"/><rect x="0" y="10" width="3.9" height="3.7" fill="#e29232"/><rect x="10" y="10" width="3.9" height="3.7" fill="#c98222"/><rect x="5.1" y="12.1" width="3.9" height="3.7" fill="#c97224"/></svg>
<svg style="position:absolute;left:75px;top:452px;" width="6" height="10" viewBox="0 0 6 10"><path d="M0.5 0.5L5.5 5L0.5 9.5Z" fill="#fff" stroke="#8a8a8a" stroke-width="1"/></svg>
<div class="t" style="left:110.5px;top:470px;font-size:12px;color:#111;">Silicone [solid]</div>
<div class="t" style="left:193.205078125px;top:470px;font-size:12px;color:#111;font-style:italic">(mat2)</div>
<svg style="position:absolute;left:89px;top:467px;" width="16" height="16" viewBox="0 0 16 16"><rect x="5.1" y="2.1" width="3.9" height="3.7" fill="#f0b232"/><rect x="0" y="5" width="3.9" height="3.7" fill="#f1b224"/><rect x="10" y="5" width="3.9" height="3.7" fill="#ef9530"/><rect x="5.1" y="7.1" width="3.9" height="3.7" fill="#f5900f"/><rect x="0" y="10" width="3.9" height="3.7" fill="#e29232"/><rect x="10" y="10" width="3.9" height="3.7" fill="#c98222"/><rect x="5.1" y="12.1" width="3.9" height="3.7" fill="#c97224"/></svg>
<svg style="position:absolute;left:75px;top:470px;" width="6" height="10" viewBox="0 0 6 10"><path d="M0.5 0.5L5.5 5L0.5 9.5Z" fill="#fff" stroke="#8a8a8a" stroke-width="1"/></svg>
<div class="t" style="left:110.5px;top:488px;font-size:12px;color:#111;">G-10CR resin [solid]</div>
<div class="t" style="left:224.53515625px;top:488px;font-size:12px;color:#111;font-style:italic">(mat3)</div>
<svg style="position:absolute;left:89px;top:485px;" width="16" height="16" viewBox="0 0 16 16"><rect x="5.1" y="2.1" width="3.9" height="3.7" fill="#f0b232"/><rect x="0" y="5" width="3.9" height="3.7" fill="#f1b224"/><rect x="10" y="5" width="3.9" height="3.7" fill="#ef9530"/><rect x="5.1" y="7.1" width="3.9" height="3.7" fill="#f5900f"/><rect x="0" y="10" width="3.9" height="3.7" fill="#e29232"/><rect x="10" y="10" width="3.9" height="3.7" fill="#c98222"/><rect x="5.1" y="12.1" width="3.9" height="3.7" fill="#c97224"/><path d="M0.3 10.8L5.5 16M5.5 10.8L0.3 16" stroke="#c8205a" stroke-width="1.7"/></svg>
<svg style="position:absolute;left:75px;top:488px;" width="6" height="10" viewBox="0 0 6 10"><path d="M0.5 0.5L5.5 5L0.5 9.5Z" fill="#fff" stroke="#8a8a8a" stroke-width="1"/></svg>
<div class="t" style="left:90.5px;top:506px;font-size:12px;color:#111;">Solid Mechanics</div>
<div class="t" style="left:183.875px;top:506px;font-size:12px;color:#111;font-style:italic">(solid)</div>
<svg style="position:absolute;left:69px;top:503px;" width="16" height="16" viewBox="0 0 16 16"><rect x="7" y="0.5" width="3.5" height="2.8" fill="#eaf1fa" stroke="#5b8ac4" stroke-width="0.9"/><rect x="0.5" y="3.3" width="15" height="6.5" fill="#eaf1fa" stroke="#5b8ac4" stroke-width="1"/><path d="M1 6.5H15" stroke="#8fb0da" stroke-width="1.4"/><rect x="4.5" y="9.8" width="7.5" height="2.6" fill="#eaf1fa" stroke="#5b8ac4" stroke-width="0.9"/><rect x="6.5" y="12.4" width="3.5" height="2.6" fill="#eaf1fa" stroke="#5b8ac4" stroke-width="0.9"/></svg>
<svg style="position:absolute;left:54px;top:508px;" width="6" height="6" viewBox="0 0 6 6"><path d="M6 0V6H0Z" fill="#1b1b1b"/></svg>
<div class="t" style="left:110.5px;top:524px;font-size:12px;color:#111;">Linear Elastic Material 1</div>
<svg style="position:absolute;left:89px;top:521px;" width="16" height="16" viewBox="0 0 16 16"><rect x="-1" y="3" width="16" height="10.6" rx="4" fill="#0b5aa0"/><rect x="-1.5" y="1.5" width="7" height="7" fill="#fff"/><path d="M0 2.5V7.5H2Q4.3 7.5 4.3 5T2 2.5Z" fill="none" stroke="#111" stroke-width="1"/></svg>
<div class="t" style="left:110.5px;top:542px;font-size:12px;color:#111;">Free 1</div>
<svg style="position:absolute;left:89px;top:539px;" width="16" height="16" viewBox="0 0 16 16"><rect x="-0.5" y="3.5" width="15" height="10" rx="4" fill="#e2e4ea" stroke="#555" stroke-width="1"/><path d="M0 8.5H14.5" stroke="#555" stroke-width="1"/><rect x="-1.5" y="1.5" width="7" height="7" fill="#fff"/><path d="M0 2.5V7.5H2Q4.3 7.5 4.3 5T2 2.5Z" fill="none" stroke="#111" stroke-width="1"/></svg>
<div class="t" style="left:110.5px;top:560px;font-size:12px;color:#111;">Initial Values 1</div>
<svg style="position:absolute;left:89px;top:557px;" width="16" height="16" viewBox="0 0 16 16"><rect x="-1" y="3" width="16" height="10.6" rx="4" fill="#0b5aa0"/><rect x="-1.5" y="1.5" width="7" height="7" fill="#fff"/><path d="M0 2.5V7.5H2Q4.3 7.5 4.3 5T2 2.5Z" fill="none" stroke="#111" stroke-width="1"/></svg>
<div class="t" style="left:110.5px;top:578px;font-size:12px;color:#111;">Rotating Frame 1</div>
<svg style="position:absolute;left:89px;top:575px;" width="16" height="16" viewBox="0 0 16 16"><rect x="-1" y="3" width="16" height="10.6" rx="4" fill="#0b5aa0"/></svg>
<div class="t" style="left:110.5px;top:596px;font-size:12px;color:#111;">Rotating Frame 2</div>
<svg style="position:absolute;left:89px;top:593px;" width="16" height="16" viewBox="0 0 16 16"><rect x="-1" y="3" width="16" height="10.6" rx="4" fill="#0b5aa0"/></svg>
<div class="t" style="left:110.5px;top:614px;font-size:12px;color:#111;">Elastoplastic Soil Material 1</div>
<svg style="position:absolute;left:89px;top:611px;" width="16" height="16" viewBox="0 0 16 16"><rect x="-1" y="3" width="16" height="10.6" rx="4" fill="#0b5aa0"/></svg>
<div class="t" style="left:110.5px;top:632px;font-size:12px;color:#111;">Contact 1</div>
<svg style="position:absolute;left:89px;top:629px;" width="16" height="16" viewBox="0 0 16 16"><path d="M0.5 10V5.5Q0.5 1.5 4.5 1.5H11.5Q15.5 1.5 15.5 5.5V6.5Q15.5 10.5 11.5 10.5H8" fill="#e2e4ea" stroke="#555" stroke-width="1"/><path d="M1 6H15.5" stroke="#555"/><path d="M0.5 11H4.5V15H0.5Z M5 11H9V15H5Z" fill="#fff" stroke="#3d6fb0" stroke-width="0.9"/><path d="M4.5 13H5" stroke="#3d6fb0"/></svg>
<svg style="position:absolute;left:74px;top:634px;" width="6" height="6" viewBox="0 0 6 6"><path d="M6 0V6H0Z" fill="#1b1b1b"/></svg>
<div class="t" style="left:130.5px;top:650px;font-size:12px;color:#111;">Free 1</div>
<svg style="position:absolute;left:109px;top:647px;" width="16" height="16" viewBox="0 0 16 16"><path d="M1 9V6Q1 3 4 3H11.5Q15.5 3 15.5 7V8Q15.5 12.5 11.5 12.5H8" fill="#e2e4ea" stroke="#555" stroke-width="1"/><path d="M1.5 8H15.5" stroke="#555"/><rect x="-1.5" y="1.5" width="7" height="7" fill="#fff"/><path d="M0 2.5V7.5H2Q4.3 7.5 4.3 5T2 2.5Z" fill="none" stroke="#111" stroke-width="1"/><path d="M0.5 11V15.5M0.5 13.2H5M5 11V15.5" stroke="#3d6fb0" stroke-width="0.9"/><path d="M5.5 11H8.5V15.5H5.5" fill="none" stroke="#3d6fb0" stroke-width="0.9"/></svg>
<div class="t" style="left:90.5px;top:668px;font-size:12px;color:#111;">Laminar Flow</div>
<div class="t" style="left:168.5234375px;top:668px;font-size:12px;color:#111;font-style:italic">(spf)</div>
<svg style="position:absolute;left:69px;top:665px;" width="16" height="16" viewBox="0 0 16 16"><path d="M0.5 4Q4 1 8 4T15.5 5M0.5 8Q4 5 8 8T15.5 9M0.5 12Q4 9 8 12T15.5 13" fill="none" stroke="#7f9fcc" stroke-width="1.1"/></svg>
<svg style="position:absolute;left:54px;top:670px;" width="6" height="6" viewBox="0 0 6 6"><path d="M6 0V6H0Z" fill="#1b1b1b"/></svg>
<div class="t" style="left:110.5px;top:686px;font-size:12px;color:#111;">Fluid Properties 1</div>
<svg style="position:absolute;left:89px;top:683px;" width="16" height="16" viewBox="0 0 16 16"><rect x="-1" y="3" width="16" height="10.6" rx="4" fill="#0b5aa0"/><rect x="-1.5" y="1.5" width="7" height="7" fill="#fff"/><path d="M0 2.5V7.5H2Q4.3 7.5 4.3 5T2 2.5Z" fill="none" stroke="#111" stroke-width="1"/></svg>
<div class="t" style="left:110.5px;top:704px;font-size:12px;color:#111;">Initial Values 1</div>
<svg style="position:absolute;left:89px;top:701px;" width="16" height="16" viewBox="0 0 16 16"><rect x="-1" y="3" width="16" height="10.6" rx="4" fill="#0b5aa0"/><rect x="-1.5" y="1.5" width="7" height="7" fill="#fff"/><path d="M0 2.5V7.5H2Q4.3 7.5 4.3 5T2 2.5Z" fill="none" stroke="#111" stroke-width="1"/></svg>
<div class="t" style="left:110.5px;top:722px;font-size:12px;color:#111;">Wall 1</div>
<svg style="position:absolute;left:89px;top:719px;" width="16" height="16" viewBox="0 0 16 16"><rect x="-0.5" y="3.5" width="15" height="10" rx="4" fill="#e2e4ea" stroke="#555" stroke-width="1"/><path d="M0 8.5H14.5" stroke="#555" stroke-width="1"/><rect x="-1.5" y="1.5" width="7" height="7" fill="#fff"/><path d="M0 2.5V7.5H2Q4.3 7.5 4.3 5T2 2.5Z" fill="none" stroke="#111" stroke-width="1"/></svg>
<div class="t" style="left:90.5px;top:740px;font-size:12px;color:#111;">Multiphysics</div>
<svg style="position:absolute;left:69px;top:737px;" width="16" height="16" viewBox="0 0 16 16"><g fill="none" stroke="#8a9098" stroke-width="0.9"><ellipse cx="7" cy="5" rx="1.6" ry="3.8"/><ellipse cx="7" cy="5" rx="1.6" ry="3.8" transform="rotate(60 7 5)"/><ellipse cx="7" cy="5" rx="1.6" ry="3.8" transform="rotate(-60 7 5)"/></g><circle cx="7" cy="5" r="1.1" fill="#5a9a5a"/><path d="M5 8.5L1.5 11M9 8.5L13 11" stroke="#5a7fb5" stroke-width="0.8"/><path d="M4.5 13.5V16.6H13.5V13.5M8.6 13.5V16.6" fill="none" stroke="#555" stroke-width="0.9"/><rect x="-1" y="10.8" width="2.9" height="3" fill="#3d75c0"/><rect x="3.1" y="10.8" width="2.9" height="3" fill="#3a9a3a"/><rect x="7.2" y="10.8" width="2.9" height="3" fill="#e0703a"/><rect x="12.1" y="10.8" width="2.9" height="3" fill="#c8206a"/></svg>
<svg style="position:absolute;left:54px;top:742px;" width="6" height="6" viewBox="0 0 6 6"><path d="M6 0V6H0Z" fill="#1b1b1b"/></svg>
<div class="t" style="left:110.5px;top:758px;font-size:12px;color:#111;">Fluid-Structure Interaction 1</div>
<div class="t" style="left:264.56640625px;top:758px;font-size:12px;color:#111;font-style:italic">(fsi1)</div>
<svg style="position:absolute;left:89px;top:755px;" width="16" height="16" viewBox="0 0 16 16"><path d="M0.5 6Q4 5.5 7 3.5Q10 1.5 15.5 1.5M0.5 9Q4 8.5 7 6.5Q10 4.5 15.5 4.5M0.5 11.5Q4 11 6.5 9.5Q8 8.5 9.5 7.5" fill="none" stroke="#7f9fcc" stroke-width="1"/><path d="M9.5 15L11 7.5Q11.5 5.8 13.5 6L12.5 15Z" fill="#3f7fc0"/><rect x="0" y="14.5" width="16" height="2" fill="#3f7fc0"/></svg>
<div class="t" style="left:90.5px;top:776px;font-size:12px;color:#111;">Mesh 1</div>
<svg style="position:absolute;left:69px;top:773px;" width="16" height="16" viewBox="0 0 16 16"><path d="M8 1L15.5 14.5H0.5Z" fill="#b0b4ba" stroke="#5f6469" stroke-width="1.1"/><path d="M5.5 5.5H10.5M3 10H13M5.5 14.5L10.5 5.5M10.5 14.5L5.5 5.5M3 10L5.5 14.5M13 10L10.5 14.5" stroke="#f0f0f0" stroke-width="0.7"/></svg>
<svg style="position:absolute;left:55px;top:776px;" width="6" height="10" viewBox="0 0 6 10"><path d="M0.5 0.5L5.5 5L0.5 9.5Z" fill="#fff" stroke="#8a8a8a" stroke-width="1"/></svg>
<div class="t" style="left:70.5px;top:794px;font-size:12px;color:#111;">Study 1</div>
<svg style="position:absolute;left:49px;top:791px;" width="16" height="16" viewBox="0 0 16 16"><g fill="none" stroke="#22707f" stroke-width="1.1"><path d="M-0.8 8.5Q0.5 5.5 2.2 6.2L4.6 8.3"/><circle cx="6.6" cy="9.4" r="2.1"/><circle cx="12.9" cy="9.4" r="2.1"/><path d="M8.7 9.3H10.8"/><path d="M8.6 8V6.3Q9.6 5.6 13.2 6.8"/></g></svg>
<svg style="position:absolute;left:35px;top:794px;" width="6" height="10" viewBox="0 0 6 10"><path d="M0.5 0.5L5.5 5L0.5 9.5Z" fill="#fff" stroke="#8a8a8a" stroke-width="1"/></svg>
<div class="t" style="left:70.5px;top:812px;font-size:12px;color:#111;">Results</div>
<svg style="position:absolute;left:49px;top:809px;" width="16" height="16" viewBox="0 0 16 16"><path d="M0.5 10.5V14L3 16H15.5V13.5" fill="#d8d8d8" stroke="#777" stroke-width="0.9"/><rect x="1.5" y="0.5" width="10" height="10" fill="#fff" stroke="#666" stroke-width="0.9"/><rect x="3.5" y="2.5" width="10" height="10" fill="#fff" stroke="#666" stroke-width="0.9"/><rect x="5.5" y="4.5" width="10" height="10" fill="#fff" stroke="#666" stroke-width="0.9"/><rect x="7" y="6" width="7" height="6" fill="#b81e6b"/></svg>
<svg style="position:absolute;left:34px;top:814px;" width="6" height="6" viewBox="0 0 6 6"><path d="M6 0V6H0Z" fill="#1b1b1b"/></svg>
<div class="t" style="left:90.5px;top:830px;font-size:12px;color:#111;">Data Sets</div>
<svg style="position:absolute;left:69px;top:827px;" width="16" height="16" viewBox="0 0 16 16"><rect x="0.8" y="1.5" width="2" height="1.1" fill="#c8a0b8"/><rect x="0.8" y="3.4" width="2" height="1.1" fill="#b0306a"/><rect x="0.8" y="5.3" width="2" height="1.1" fill="#b0306a"/><rect x="0.8" y="7.2" width="2" height="1.1" fill="#c8a0b8"/><rect x="0.8" y="9.1" width="2" height="1.1" fill="#b0306a"/><rect x="0.8" y="11.0" width="2" height="1.1" fill="#b0306a"/><rect x="0.8" y="12.9" width="2" height="1.1" fill="#c8a0b8"/><rect x="3.6" y="1.5" width="2" height="1.1" fill="#b0306a"/><rect x="3.6" y="3.4" width="2" height="1.1" fill="#b0306a"/><rect x="3.6" y="5.3" width="2" height="1.1" fill="#c8a0b8"/><rect x="3.6" y="7.2" width="2" height="1.1" fill="#b0306a"/><rect x="3.6" y="9.1" width="2" height="1.1" fill="#b0306a"/><rect x="3.6" y="11.0" width="2" height="1.1" fill="#c8a0b8"/><rect x="3.6" y="12.9" width="2" height="1.1" fill="#b0306a"/><rect x="6.4" y="1.5" width="2" height="1.1" fill="#b0306a"/><rect x="6.4" y="3.4" width="2" height="1.1" fill="#c8a0b8"/><rect x="6.4" y="5.3" width="2" height="1.1" fill="#b0306a"/><rect x="6.4" y="7.2" width="2" height="1.1" fill="#b0306a"/><rect x="6.4" y="9.1" width="2" height="1.1" fill="#c8a0b8"/><rect x="6.4" y="11.0" width="2" height="1.1" fill="#b0306a"/><rect x="6.4" y="12.9" width="2" height="1.1" fill="#b0306a"/><rect x="9.2" y="1.5" width="2" height="1.1" fill="#c8a0b8"/><rect x="9.2" y="3.4" width="2" height="1.1" fill="#b0306a"/><rect x="9.2" y="5.3" width="2" height="1.1" fill="#b0306a"/><rect x="9.2" y="7.2" width="2" height="1.1" fill="#c8a0b8"/><rect x="9.2" y="9.1" width="2" height="1.1" fill="#b0306a"/><rect x="9.2" y="11.0" width="2" height="1.1" fill="#b0306a"/><rect x="9.2" y="12.9" width="2" height="1.1" fill="#c8a0b8"/></svg>
<svg style="position:absolute;left:55px;top:830px;" width="6" height="10" viewBox="0 0 6 10"><path d="M0.5 0.5L5.5 5L0.5 9.5Z" fill="#fff" stroke="#8a8a8a" stroke-width="1"/></svg>
<div class="t" style="left:90.5px;top:848px;font-size:12px;color:#111;">Derived Values</div>
<svg style="position:absolute;left:69px;top:845px;" width="16" height="16" viewBox="0 0 16 16"><text x="-0.5" y="8" font-family="Liberation Sans" font-size="8" font-weight="bold" fill="#b0306a" letter-spacing="-0.4">8.85</text><text x="-0.5" y="14.3" font-family="Liberation Sans" font-size="8" font-weight="bold" fill="#b0306a" letter-spacing="-0.4">e-12</text></svg>
<div class="t" style="left:90.5px;top:866px;font-size:12px;color:#111;">Tables</div>
<svg style="position:absolute;left:69px;top:863px;" width="16" height="16" viewBox="0 0 16 16"><rect x="0" y="2.3" width="13.2" height="12.7" fill="#b0306a"/><rect x="1.2" y="3.6" width="2.9" height="1.9" fill="#fff"/><rect x="1.2" y="6.5" width="2.9" height="1.9" fill="#fff"/><rect x="1.2" y="9.4" width="2.9" height="1.9" fill="#fff"/><rect x="1.2" y="12.3" width="2.9" height="1.9" fill="#fff"/><rect x="5.2" y="3.6" width="2.9" height="1.9" fill="#fff"/><rect x="5.2" y="6.5" width="2.9" height="1.9" fill="#e8a8c8"/><rect x="5.2" y="9.4" width="2.9" height="1.9" fill="#e8a8c8"/><rect x="5.2" y="12.3" width="2.9" height="1.9" fill="#fff"/><rect x="9.2" y="3.6" width="2.9" height="1.9" fill="#e8a8c8"/><rect x="9.2" y="6.5" width="2.9" height="1.9" fill="#fff"/><rect x="9.2" y="9.4" width="2.9" height="1.9" fill="#fff"/><rect x="9.2" y="12.3" width="2.9" height="1.9" fill="#fff"/></svg>
<svg style="position:absolute;left:55px;top:866px;" width="6" height="10" viewBox="0 0 6 10"><path d="M0.5 0.5L5.5 5L0.5 9.5Z" fill="#fff" stroke="#8a8a8a" stroke-width="1"/></svg>
<div class="t" style="left:90.5px;top:884px;font-size:12px;color:#111;">Export</div>
<svg style="position:absolute;left:69px;top:881px;" width="16" height="16" viewBox="0 0 16 16"><path d="M1 5L5 1H15.5V11.5L11.5 15.5H1Z" fill="#f6e0ea" stroke="#b81e6b" stroke-width="1"/><path d="M1 5H11.5V15.5M11.5 5L15.5 1" fill="none" stroke="#b81e6b"/><rect x="3.5" y="8" width="6" height="5" fill="#fff" stroke="#b81e6b"/><path d="M4 6.5H10M5 1.5L3 5M8 1.5L6 5" stroke="#b81e6b" stroke-width="0.8"/></svg>
<div class="t" style="left:90.5px;top:902px;font-size:12px;color:#111;">Reports</div>
<svg style="position:absolute;left:69px;top:899px;" width="16" height="16" viewBox="0 0 16 16"><rect x="0.5" y="1.5" width="15" height="13.5" fill="#fff" stroke="#555" stroke-width="1"/><path d="M8 1.5V15" stroke="#999" stroke-width="0.7"/><path d="M2 4.5H6.5M2 7H6.5M2 9.5H5.5M9.5 4.5H14M9.5 7H14" stroke="#555" stroke-width="0.9"/><path d="M6.5 6.5L13.5 14.5" stroke="#c8205a" stroke-width="2.4"/></svg>
<div class="t" style="left:434.75px;top:150px;font-size:20px;color:#3b5a85;letter-spacing:-0.75px;-webkit-text-stroke:0.5px #f9fafd">Settings</div>
<div class="t" style="left:433.8px;top:179px;font-size:14px;color:#4a6a96;letter-spacing:-0.3px;-webkit-text-stroke:0.25px #f9fafd">Solid Mechanics</div>
<svg style="position:absolute;left:932px;top:156px;" width="9" height="5" viewBox="0 0 9 5"><path d="M0 0H9L4.5 5Z" fill="#b9c1cc"/></svg>
<svg style="position:absolute;left:946px;top:153px;" width="8" height="11" viewBox="0 0 8 11"><rect x="1.5" y="0" width="5" height="6" fill="#b9c1cc"/><rect x="0" y="5.5" width="8" height="1.5" fill="#b9c1cc"/><rect x="3.5" y="7" width="1" height="4" fill="#b9c1cc"/></svg>
<div style="position:absolute;left:941px;top:198px;width:17px;height:809px;background:#efefef"></div>
<div style="position:absolute;left:941px;top:223px;width:17px;height:766px;background:#cdcdcd"></div>
<svg style="position:absolute;left:945px;top:206px;" width="9" height="5" viewBox="0 0 9 5"><path d="M0.5 4.5L4.5 0.5L8.5 4.5" fill="none" stroke="#a0a0a0" stroke-width="1.1"/></svg>
<svg style="position:absolute;left:945px;top:994px;" width="9" height="5" viewBox="0 0 9 5"><path d="M0.5 0.5L4.5 4.5L8.5 0.5" fill="none" stroke="#a0a0a0" stroke-width="1.1"/></svg>
<div class="t" style="left:432.4px;top:205px;font-size:12px;color:#1b1b1b;">Label:</div>
<div style="position:absolute;left:477px;top:201px;width:430px;height:19px;background:#ffffff;border:1px solid #cdcdcd;box-sizing:border-box"></div>
<div class="t" style="left:480.2px;top:205px;font-size:12px;color:#1b1b1b;">Solid Mechanics</div>
<div style="position:absolute;left:915px;top:199px;width:22px;height:23px;background:linear-gradient(#f4f4f4,#e4e4e4);border:1px solid #b0b0b0;border-radius:3px;box-sizing:border-box"></div>
<svg style="position:absolute;left:918px;top:202px;" width="16" height="16" viewBox="0 0 16 16"><rect x="2.5" y="1.5" width="12" height="12" fill="#fff" stroke="#555" stroke-width="1.1"/><rect x="2.5" y="1.5" width="12" height="2.5" fill="#999"/><path d="M6 7H13M6 9.5H13" stroke="#3d8f3a" stroke-width="1"/><path d="M1 15L5 11M2 10.5H5.5V14" fill="none" stroke="#3d8f3a" stroke-width="1.4"/></svg>
<div class="t" style="left:432.4px;top:232px;font-size:12px;color:#1b1b1b;">Name:</div>
<div style="position:absolute;left:477px;top:228px;width:430px;height:19px;background:#ffffff;border:1px solid #cdcdcd;box-sizing:border-box"></div>
<div class="t" style="left:480.2px;top:232px;font-size:12px;color:#1b1b1b;">solid</div>
<div style="position:absolute;left:427px;top:256px;width:514px;height:25px;background:#dfe7f3"></div>
<svg style="position:absolute;left:432px;top:266px;" width="9" height="5" viewBox="0 0 9 5"><path d="M0 0H9L4.5 5Z" fill="#3a3f47"/></svg>
<div class="t" style="left:453px;top:262px;font-size:13px;color:#1b1b1b;">Domain Selection</div>
<div class="t" style="left:432px;top:295px;font-size:12px;color:#1b1b1b;">Selection:</div>
<div style="position:absolute;left:493px;top:290px;width:443px;height:20px;background:linear-gradient(#f2f2f2,#e6e6e6);border:1px solid #adadad;border-radius:2px;box-sizing:border-box"></div>
<div class="t" style="left:505px;top:294px;font-size:12px;color:#1b1b1b;">All domains</div>
<svg style="position:absolute;left:922px;top:298px;" width="9" height="5" viewBox="0 0 9 5"><path d="M0 0H9L4.5 5Z" fill="#1b1b1b"/></svg>
<div style="position:absolute;left:431px;top:316px;width:40px;height:39px;background:#a8d0f3;border:1px solid #4c7fb3;border-radius:3px;box-sizing:border-box"></div>
<svg style="position:absolute;left:435px;top:328px;" width="30" height="14" viewBox="0 0 30 14"><rect x="0.5" y="0.5" width="29" height="13" rx="1.5" fill="#e6e6e6" stroke="#8a8a8a"/><text x="3" y="10" font-family="Liberation Sans" font-size="8" font-weight="bold" fill="#3aa040">ON</text><rect x="18" y="2.5" width="9" height="9" fill="#9a9a9a" stroke="#777" stroke-width="0.8"/></svg>
<div class="t" style="left:433px;top:361px;font-size:12px;color:#1b1b1b;">Active</div>
<div style="position:absolute;left:478px;top:316px;width:390px;height:119px;background:#fff;border:1px solid #cdcdcd;border-bottom:3px solid #c8c8c8;box-sizing:border-box"></div>
<div class="t" style="left:485.5px;top:322px;font-size:12px;color:#1b1b1b;">1</div>
<div class="t" style="left:485.5px;top:341px;font-size:12px;color:#1b1b1b;">2</div>
<div class="t" style="left:485.5px;top:360px;font-size:12px;color:#1b1b1b;">3</div>
<svg style="position:absolute;left:883px;top:318px;" width="16" height="15" viewBox="0 0 16 15"><rect x="0.5" y="0.5" width="5" height="4" fill="#ccc" stroke="#aaa" stroke-width="0.6"/><rect x="4" y="3.5" width="5" height="4" fill="#ccc" stroke="#aaa" stroke-width="0.6"/><rect x="8.5" y="8" width="6" height="5" fill="#3d75c0"/><path d="M3 3L11 10" stroke="#bbb" stroke-width="1"/></svg>
<svg style="position:absolute;left:884px;top:338px;" width="16" height="15" viewBox="0 0 16 15"><rect x="0.5" y="0.5" width="9" height="9" fill="#fff" stroke="#666" stroke-width="0.9"/><path d="M2 3H8M2 5H8M2 7H6" stroke="#666" stroke-width="0.7"/><rect x="6" y="5.5" width="9" height="9" fill="#fff" stroke="#34495e" stroke-width="1.1"/><path d="M7.8 8H13.2M7.8 10.2H13.2M7.8 12.4H13.2" stroke="#34495e" stroke-width="1"/></svg>
<svg style="position:absolute;left:884px;top:358px;" width="16" height="16" viewBox="0 0 16 16"><rect x="0.5" y="2" width="9" height="11" fill="#e3a93a" stroke="#d09530" stroke-width="0.6"/><rect x="2.5" y="0.5" width="5" height="3" rx="1" fill="#fff" stroke="#777" stroke-width="0.7"/><rect x="6" y="6" width="9" height="9.5" fill="#fff" stroke="#34495e" stroke-width="1.1"/></svg>
<svg style="position:absolute;left:884px;top:378px;" width="16" height="16" viewBox="0 0 16 16"><rect x="3.5" y="4" width="8" height="8" fill="#fff" stroke="#555" stroke-width="1"/><path d="M7.5 6V10M5.5 8H9.5" stroke="#555" stroke-width="1"/><path d="M7.5 0L9 2H6Z M7.5 16L9 14H6Z M0 8L2 6.5V9.5Z M15 8L13 6.5V9.5Z" fill="#5b8ac4"/></svg>
<svg style="position:absolute;left:920px;top:319px;" width="13" height="13" viewBox="0 0 13 13"><path d="M6.5 0V13M0 6.5H13" stroke="#c2c2c2" stroke-width="2.6"/></svg>
<div style="position:absolute;left:920px;top:344px;width:13px;height:3px;background:#4a74ad"></div>
<svg style="position:absolute;left:918px;top:358px;" width="16" height="16" viewBox="0 0 16 16"><path d="M3.5 1.5H15.5V15.5H3.5Z" fill="none" stroke="#3d6fa8" stroke-width="1" stroke-dasharray="2 1.5"/><path d="M6 4H13V11Z" fill="#8aaed8"/><path d="M1 0.5L5 8" stroke="#c89c6a" stroke-width="1.2"/><path d="M3 7.5L7 6.5L8.5 15L5 16Z" fill="#e6b884"/></svg>
<div style="position:absolute;left:427px;top:447px;width:514px;height:25px;background:#dfe7f3"></div>
<svg style="position:absolute;left:433px;top:454px;" width="6" height="10" viewBox="0 0 6 10"><path d="M0.5 0.5L5.5 5L0.5 9.5Z" fill="none" stroke="#8a8a8a" stroke-width="1"/></svg>
<div class="t" style="left:453px;top:453px;font-size:13px;color:#1b1b1b;">Equation</div>
<div style="position:absolute;left:427px;top:474px;width:514px;height:25px;background:#dfe7f3"></div>
<svg style="position:absolute;left:432px;top:484px;" width="9" height="5" viewBox="0 0 9 5"><path d="M0 0H9L4.5 5Z" fill="#3a3f47"/></svg>
<div class="t" style="left:453px;top:480px;font-size:13px;color:#1b1b1b;">Physics Symbols</div>
<div style="position:absolute;left:433px;top:509px;width:13px;height:13px;background:#fff;border:1px solid #555;box-sizing:border-box"></div>
<div class="t" style="left:452.4px;top:509px;font-size:12px;color:#1b1b1b;">Enable physics symbols</div>
<div style="position:absolute;left:433px;top:534px;width:9px;height:1px;background:#d4d4d4"></div>
<div class="t" style="left:446px;top:528px;font-size:12px;color:#1b1b1b;">Show or hide all physics symbols</div>
<div style="position:absolute;left:623px;top:534px;width:313px;height:1px;background:#d4d4d4"></div>
<div style="position:absolute;left:431px;top:544px;width:74px;height:19px;background:#efefef;border:1px solid #d2d2d2;box-sizing:border-box"></div>
<div style="position:absolute;left:512px;top:544px;width:71px;height:19px;background:#efefef;border:1px solid #d2d2d2;box-sizing:border-box"></div>
<div class="t" style="left:443px;top:548px;font-size:12px;color:#8d8d8d;">Select All</div>
<div class="t" style="left:525px;top:548px;font-size:12px;color:#8d8d8d;">Clear All</div>
<div style="position:absolute;left:427px;top:572px;width:514px;height:25px;background:#dfe7f3"></div>
<svg style="position:absolute;left:432px;top:582px;" width="9" height="5" viewBox="0 0 9 5"><path d="M0 0H9L4.5 5Z" fill="#3a3f47"/></svg>
<div class="t" style="left:453px;top:578px;font-size:13px;color:#1b1b1b;">2D Approximation</div>
<div style="position:absolute;left:432px;top:606px;width:504px;height:20px;background:linear-gradient(#f2f2f2,#e6e6e6);border:1px solid #adadad;border-radius:2px;box-sizing:border-box"></div>
<div class="t" style="left:444px;top:610px;font-size:12px;color:#1b1b1b;">Plane strain</div>
<svg style="position:absolute;left:922px;top:614px;" width="9" height="5" viewBox="0 0 9 5"><path d="M0 0H9L4.5 5Z" fill="#1b1b1b"/></svg>
<div style="position:absolute;left:433px;top:633px;width:13px;height:13px;background:#fff;border:1px solid #555;box-sizing:border-box"></div>
<div class="t" style="left:452.4px;top:633px;font-size:12px;color:#1b1b1b;">Out-of-plane mode extension (time-harmonic)</div>
<div class="t" style="left:432.5px;top:655px;font-size:12px;color:#8a8a8a;">Out-of-plane wave number:</div>
<div class="t" style="left:433px;top:674px;font-size:15px;color:#8a8a8a;"><i>k</i><i style="font-size:12px;position:relative;top:3px;left:1px">z</i></div>
<div style="position:absolute;left:460px;top:674px;width:433px;height:19px;background:#fafbfc;border:1px solid #dedede;box-sizing:border-box"></div>
<div class="t" style="left:465px;top:678px;font-size:12px;color:#a0a0a0;">0</div>
<div class="t" style="left:903.2px;top:678px;font-size:12px;color:#1b1b1b;">rad/m</div>
<div style="position:absolute;left:427px;top:704px;width:514px;height:25px;background:#dfe7f3"></div>
<svg style="position:absolute;left:432px;top:714px;" width="9" height="5" viewBox="0 0 9 5"><path d="M0 0H9L4.5 5Z" fill="#3a3f47"/></svg>
<div class="t" style="left:453px;top:710px;font-size:13px;color:#1b1b1b;">Thickness</div>
<div class="t" style="left:433.5px;top:740px;font-size:14px;color:#1b1b1b;font-style:italic">d</div>
<div style="position:absolute;left:453px;top:738px;width:462px;height:19px;background:#ffffff;border:1px solid #cdcdcd;box-sizing:border-box"></div>
<div class="t" style="left:456.8px;top:742px;font-size:12px;color:#1b1b1b;">1</div>
<div class="t" style="left:925.2px;top:743px;font-size:12px;color:#1b1b1b;">m</div>
<div style="position:absolute;left:427px;top:768px;width:514px;height:25px;background:#dfe7f3"></div>
<svg style="position:absolute;left:432px;top:778px;" width="9" height="5" viewBox="0 0 9 5"><path d="M0 0H9L4.5 5Z" fill="#3a3f47"/></svg>
<div class="t" style="left:453px;top:774px;font-size:13px;color:#1b1b1b;">Structural Transient Behavior</div>
<div style="position:absolute;left:432px;top:802px;width:504px;height:20px;background:linear-gradient(#f2f2f2,#e6e6e6);border:1px solid #adadad;border-radius:2px;box-sizing:border-box"></div>
<div class="t" style="left:444px;top:806px;font-size:12px;color:#1b1b1b;">Include inertial terms</div>
<svg style="position:absolute;left:922px;top:810px;" width="9" height="5" viewBox="0 0 9 5"><path d="M0 0H9L4.5 5Z" fill="#1b1b1b"/></svg>
<div style="position:absolute;left:427px;top:833px;width:514px;height:25px;background:#dfe7f3"></div>
<svg style="position:absolute;left:432px;top:843px;" width="9" height="5" viewBox="0 0 9 5"><path d="M0 0H9L4.5 5Z" fill="#3a3f47"/></svg>
<div class="t" style="left:453px;top:839px;font-size:13px;color:#1b1b1b;">Reference Point for Moment Computation</div>
<div class="t" style="left:434px;top:878px;font-size:14px;color:#1b1b1b;"><b><i>x</i></b><span style="font-size:12px;position:relative;top:2px;left:1px">ref</span></div>
<div style="position:absolute;left:469px;top:867px;width:445px;height:37px;background:#ffffff;border:1px solid #cdcdcd;box-sizing:border-box"></div>
<div style="position:absolute;left:469px;top:885px;width:425px;height:1px;background:#cdcdcd"></div>
<div style="position:absolute;left:893px;top:867px;width:21px;height:37px;background:#eeeeee;border:1px solid #cdcdcd;box-sizing:border-box"></div>
<div style="position:absolute;left:893px;top:885px;width:21px;height:1px;background:#cdcdcd"></div>
<div class="t" style="left:472.5px;top:871px;font-size:12px;color:#1b1b1b;">0</div>
<div class="t" style="left:472.5px;top:889px;font-size:12px;color:#1b1b1b;">0</div>
<div class="t" style="left:897px;top:871px;font-size:12px;color:#1b1b1b;">x</div>
<div class="t" style="left:897px;top:889px;font-size:12px;color:#1b1b1b;">y</div>
<div class="t" style="left:925.2px;top:881px;font-size:12px;color:#1b1b1b;">m</div>
<div style="position:absolute;left:427px;top:916px;width:514px;height:25px;background:#dfe7f3"></div>
<svg style="position:absolute;left:432px;top:926px;" width="9" height="5" viewBox="0 0 9 5"><path d="M0 0H9L4.5 5Z" fill="#3a3f47"/></svg>
<div class="t" style="left:453px;top:922px;font-size:13px;color:#1b1b1b;">Typical Wave Speed for Perfectly Matched Layers</div>
<div class="t" style="left:434px;top:952px;font-size:14px;color:#1b1b1b;"><i>c</i><span style="font-size:12px;position:relative;top:2px;left:1px">ref</span></div>
<div style="position:absolute;left:466px;top:950px;width:439px;height:19px;background:#ffffff;border:1px solid #cdcdcd;box-sizing:border-box"></div>
<div class="t" style="left:469px;top:953px;font-size:12px;color:#1b1b1b;">solid.cp</div>
<div class="t" style="left:915.4px;top:954px;font-size:12px;color:#1b1b1b;">m/s</div>
<div style="position:absolute;left:427px;top:980px;width:514px;height:25px;background:#dfe7f3"></div>
<svg style="position:absolute;left:433px;top:988px;" width="6" height="10" viewBox="0 0 6 10"><path d="M0.5 0.5L5.5 5L0.5 9.5Z" fill="none" stroke="#8a8a8a" stroke-width="1"/></svg>
<div class="t" style="left:453px;top:986px;font-size:13px;color:#1b1b1b;">Dependent Variables</div>
<div class="t" style="left:972.5px;top:150px;font-size:20px;color:#3b5a85;letter-spacing:-0.75px;-webkit-text-stroke:0.5px #f9fafd">Graphics</div>
<svg style="position:absolute;left:1889px;top:156px;" width="9" height="5" viewBox="0 0 9 5"><path d="M0 0H9L4.5 5Z" fill="#b9c1cc"/></svg>
<svg style="position:absolute;left:1903px;top:153px;" width="8" height="11" viewBox="0 0 8 11"><rect x="1.5" y="0" width="5" height="6" fill="#b9c1cc"/><rect x="0" y="5.5" width="8" height="1.5" fill="#b9c1cc"/><rect x="3.5" y="7" width="1" height="4" fill="#b9c1cc"/></svg>
<svg style="position:absolute;left:972px;top:177px;" width="14" height="13" viewBox="0 0 14 13"><circle cx="6" cy="6" r="5" fill="none" stroke="#34495e" stroke-width="1.6"/><path d="M9.5 9.5L13 13" stroke="#34495e" stroke-width="2.2"/><path d="M3.5 6H8.5M6 3.5V8.5" stroke="#34495e" stroke-width="1.3"/></svg>
<svg style="position:absolute;left:996px;top:177px;" width="14" height="13" viewBox="0 0 14 13"><circle cx="6" cy="6" r="5" fill="none" stroke="#34495e" stroke-width="1.6"/><path d="M9.5 9.5L13 13" stroke="#34495e" stroke-width="2.2"/><path d="M3.5 6H8.5" stroke="#34495e" stroke-width="1.3"/></svg>
<svg style="position:absolute;left:1019px;top:177px;" width="17" height="13" viewBox="0 0 17 13"><path d="M0.5 6.5H5V12.5H0.5Z" fill="none" stroke="#34495e" stroke-width="0.9" stroke-dasharray="1.5 1"/><g transform="translate(3,0)"><circle cx="6" cy="6" r="5" fill="none" stroke="#34495e" stroke-width="1.6"/><path d="M9.5 9.5L13 13" stroke="#34495e" stroke-width="2.2"/><path d="M3.5 6H8.5M6 3.5V8.5" stroke="#34495e" stroke-width="1.3"/></g></svg>
<svg style="position:absolute;left:1042px;top:174px;" width="17" height="17" viewBox="0 0 17 17"><rect x="4.5" y="4.5" width="8" height="8" fill="#fff" stroke="#5a5a5a" stroke-width="1.2"/><path d="M8.5 6V11M6 8.5H11" stroke="#555" stroke-width="1.1"/><path d="M8.5 0.5L10.5 2.5H6.5Z M8.5 16.5L10.5 14.5H6.5Z M0.5 8.5L2.5 6.5V10.5Z M16.5 8.5L14.5 6.5V10.5Z" fill="#5b84b8"/></svg>
<svg style="position:absolute;left:1067px;top:175px;" width="15" height="15" viewBox="0 0 15 15"><rect x="0.75" y="0.75" width="13.5" height="13.5" fill="#fff" stroke="#5a5a5a" stroke-width="1.5"/><path d="M7.5 5V10M5 7.5H10" stroke="#555" stroke-width="1.1"/><path d="M7.5 1.5L10 4H5Z M7.5 13.5L10 11H5Z M1.5 7.5L4 5V10Z M13.5 7.5L11 5V10Z" fill="#5b84b8"/></svg>
<div style="position:absolute;left:1093px;top:176px;width:1px;height:15px;background:#d0d4da"></div>
<svg style="position:absolute;left:1105px;top:175px;" width="20" height="15" viewBox="0 0 20 15"><path d="M8.5 14V2" stroke="#4a74ad" stroke-width="1.1"/><path d="M8.5 0.5L10.5 3.5H6.5Z" fill="#4a74ad"/><path d="M8.5 14L3 8.5" stroke="#5aa050" stroke-width="1.1"/><path d="M2 7.5L5.5 8L2.5 11Z" fill="#5aa050"/><path d="M8.5 14L17 8.5" stroke="#c8205a" stroke-width="1.1"/><path d="M18.5 7.5L14.5 7.8L16.5 11Z" fill="#c8205a"/></svg>
<svg style="position:absolute;left:1130px;top:181px;" width="7" height="4" viewBox="0 0 7 4"><path d="M0 0H7L3.5 4Z" fill="#111"/></svg>
<div style="position:absolute;left:1152px;top:176px;width:1px;height:15px;background:#d0d4da"></div>
<svg style="position:absolute;left:1166px;top:177px;" width="17" height="13" viewBox="0 0 17 13"><rect x="0.5" y="3" width="16" height="9.5" rx="4" fill="#f4f4f4" stroke="#bbb"/><path d="M1 8H16" stroke="#bbb"/><path d="M7 9L13 2L15 4L9 10Z" fill="#c8c8c8"/></svg>
<svg style="position:absolute;left:1190px;top:177px;" width="17" height="13" viewBox="0 0 17 13"><rect x="0.5" y="0.5" width="11" height="8" rx="3.5" fill="#e4e4e4" stroke="#c8c8c8"/><rect x="5" y="4.5" width="11.5" height="8" rx="3.5" fill="#b8b8b8"/></svg>
<div style="position:absolute;left:1212px;top:174px;width:20px;height:18px;background:#a8cdf0;border:1px solid #4c7fb3;border-radius:2px;box-sizing:border-box"></div>
<svg style="position:absolute;left:1214px;top:176px;" width="16" height="13" viewBox="0 0 16 13"><rect x="0.5" y="0.5" width="15" height="11" rx="3.5" fill="#0b5aa0"/></svg>
<svg style="position:absolute;left:1238px;top:177px;" width="17" height="13" viewBox="0 0 17 13"><rect x="0.5" y="1" width="16" height="11" rx="4" fill="#f4f4f4" stroke="#bbb"/><path d="M1 6.5H16" stroke="#bbb"/></svg>
<svg style="position:absolute;left:1262px;top:177px;" width="17" height="13" viewBox="0 0 17 13"><rect x="0.5" y="1" width="16" height="11" rx="4" fill="#f4f4f4" stroke="#bbb" stroke-dasharray="3 1"/><path d="M1 6.5H16" stroke="#bbb"/></svg>
<svg style="position:absolute;left:1286px;top:176px;" width="16" height="15" viewBox="0 0 16 15"><path d="M1 3H14V13H1Z" fill="#a9b4c0"/><path d="M0 0L15.5 15" stroke="#3d5a7a" stroke-width="1.3"/></svg>
<div style="position:absolute;left:1312px;top:176px;width:1px;height:15px;background:#d0d4da"></div>
<svg style="position:absolute;left:1325px;top:175px;" width="18" height="15" viewBox="0 0 18 15"><rect x="0.5" y="4" width="16.5" height="10.5" rx="4" fill="#e8e8ec" stroke="#777"/><path d="M1 9.5H16.5" stroke="#777"/><rect x="4" y="0.5" width="9" height="6" fill="#0b5aa0" stroke="#fff" stroke-dasharray="1.5 1"/></svg>
<svg style="position:absolute;left:1350px;top:175px;" width="17" height="15" viewBox="0 0 17 15"><rect x="0.5" y="4" width="16" height="10.5" rx="4.5" fill="#34495e"/><rect x="4" y="0.5" width="9" height="7" fill="#e6e6e6" stroke="#888" stroke-dasharray="1.5 1"/></svg>
<svg style="position:absolute;left:1375px;top:175px;" width="16" height="15" viewBox="0 0 16 15"><rect x="0.5" y="0.5" width="13" height="13" fill="none" stroke="#3d6fa8" stroke-dasharray="2 1.5"/><rect x="3" y="3" width="7" height="7" fill="#7fa6d6"/><path d="M7 7L15 15" stroke="#3d75b5" stroke-width="1.5"/><path d="M6 6L11 7.5L7.5 11Z" fill="#3d75b5"/></svg>
<svg style="position:absolute;left:1399px;top:175px;" width="15" height="16" viewBox="0 0 15 16"><path d="M2.5 1.5H14.5V14.5H2.5Z" fill="none" stroke="#3d6fa8" stroke-dasharray="2 1.5"/><path d="M5 4H12V11Z" fill="#8aaed8"/><path d="M1 0L5 8" stroke="#c89c6a" stroke-width="1.2"/><path d="M3 7.5L7 6.5L8 15L5 16Z" fill="#e6b884"/></svg>
<div style="position:absolute;left:1424px;top:176px;width:1px;height:15px;background:#d0d4da"></div>
<svg style="position:absolute;left:1439px;top:178px;" width="15" height="11" viewBox="0 0 15 11"><path d="M0.5 5.5Q7.5 -1 14.5 5.5Q7.5 12 0.5 5.5Z" fill="#c4c4c4"/><circle cx="7.5" cy="5.5" r="1.8" fill="#fff"/><path d="M2 0.5L13 10.5" stroke="#9a9a9a" stroke-width="1.3"/></svg>
<svg style="position:absolute;left:1461px;top:174px;" width="18" height="17" viewBox="0 0 18 17"><rect x="0.5" y="0.5" width="17" height="16" fill="#fff" stroke="#4c7fb3" stroke-width="1.3"/><rect x="1" y="1" width="16" height="2" fill="#4c7fb3"/><path d="M3 9Q9 3 15 9Q9 14 3 9Z" fill="#34495e"/><circle cx="9" cy="9" r="1.7" fill="#fff"/><rect x="1" y="14" width="16" height="2.2" fill="#a8cdf0"/></svg>
<svg style="position:absolute;left:1486px;top:175px;" width="17" height="15" viewBox="0 0 17 15"><rect x="0.5" y="0.5" width="16" height="14" fill="#fff" stroke="#555"/><path d="M1 3H16" stroke="#555"/><path d="M4 8.5Q8.5 4 13 8.5Q8.5 13 4 8.5Z" fill="#c4c4c4"/><path d="M4.5 5L12.5 12" stroke="#888"/></svg>
<svg style="position:absolute;left:1510px;top:175px;" width="17" height="16" viewBox="0 0 17 16"><rect x="0.5" y="0.5" width="16" height="15" fill="#fff" stroke="#555"/><path d="M1 3H16" stroke="#555"/><path d="M4 6.5Q8.5 3 13 6.5Q8.5 10 4 6.5Z" fill="#34495e"/><path d="M4.5 11.5Q8.5 8.5 12.5 11.5Q8.5 14.5 4.5 11.5Z" fill="#c4c4c4"/></svg>
<svg style="position:absolute;left:1536px;top:176px;" width="13" height="14" viewBox="0 0 13 14"><path d="M3 3.5A5 5 0 1 1 2 9" fill="none" stroke="#34495e" stroke-width="1.4"/><path d="M0 1L5 1.5L1.5 6Z" fill="#34495e"/></svg>
<div style="position:absolute;left:1560px;top:176px;width:1px;height:15px;background:#d0d4da"></div>
<svg style="position:absolute;left:1574px;top:176px;" width="17" height="14" viewBox="0 0 17 14"><path d="M0 3H4.5L6 0.5H11L12.5 3H16.5V13.5H0Z" fill="#3d75b5"/><circle cx="8.3" cy="8" r="3.4" fill="#fff"/><circle cx="8.3" cy="8" r="2.2" fill="#3d75b5"/></svg>
<svg style="position:absolute;left:1598px;top:175px;" width="16" height="17" viewBox="0 0 16 17"><rect x="3" y="0.5" width="10" height="6" fill="#fff" stroke="#3d75b5" stroke-width="1.3"/><rect x="0" y="5" width="16" height="8" rx="1.5" fill="#3d75b5"/><rect x="3" y="11" width="10" height="5.5" fill="#fff" stroke="#3d75b5" stroke-width="1.2"/><rect x="12" y="7.5" width="2" height="1.5" fill="#fff"/></svg>
<div style="position:absolute;left:965px;top:196px;width:950px;height:633px;background:#ffffff"></div>
<svg style="position:absolute;left:0px;top:0px;pointer-events:none" width="1919" height="1037" viewBox="0 0 1919 1037"><path d="M1735.48 327.46L1734.22 315.06A124.40 124.40 0 0 0 1721.84 316.32L1723.10 328.72A111.96 111.96 0 0 0 1713.07 330.78L1713.07 330.78L1709.34 318.89A124.40 124.40 0 0 0 1697.47 322.62L1701.20 334.50A111.96 111.96 0 0 0 1691.79 338.54L1691.79 338.54L1685.74 327.65A124.40 124.40 0 0 0 1674.87 333.69L1680.91 344.58A111.96 111.96 0 0 0 1672.50 350.43L1672.50 350.43L1664.39 340.98A124.40 124.40 0 0 0 1654.95 349.08L1663.07 358.53A111.96 111.96 0 0 0 1656.01 365.96L1656.01 365.96L1646.16 358.33A124.40 124.40 0 0 0 1638.54 368.17L1648.39 375.79A111.96 111.96 0 0 0 1642.98 384.49L1642.98 384.49L1631.79 379.00A124.40 124.40 0 0 0 1626.31 390.17L1637.50 395.65A111.96 111.96 0 0 0 1633.94 405.26L1633.94 405.26L1621.88 402.14A124.40 124.40 0 0 0 1618.76 414.18L1630.82 417.30A111.96 111.96 0 0 0 1629.27 427.43L1629.27 427.43L1616.83 426.80A124.40 124.40 0 0 0 1616.20 439.22L1628.64 439.85A111.96 111.96 0 0 0 1629.16 450.08L1629.16 450.08L1616.85 451.97A124.40 124.40 0 0 0 1618.73 464.26L1631.04 462.38A111.96 111.96 0 0 0 1633.61 472.29L1633.61 472.29L1621.93 476.62A124.40 124.40 0 0 0 1626.25 488.28L1637.93 483.96A111.96 111.96 0 0 0 1642.44 493.15L1642.44 493.15L1631.87 499.74A124.40 124.40 0 0 0 1638.45 510.30L1649.02 503.71A111.96 111.96 0 0 0 1655.29 511.81L1655.29 511.81L1646.26 520.39A124.40 124.40 0 0 0 1654.83 529.41L1663.86 520.83A111.96 111.96 0 0 0 1671.63 527.50L1671.63 527.50L1664.52 537.72A124.40 124.40 0 0 0 1674.73 544.83L1681.84 534.60A111.96 111.96 0 0 0 1690.80 539.57L1690.80 539.57L1685.89 551.02A124.40 124.40 0 0 0 1697.32 555.93L1702.23 544.48A111.96 111.96 0 0 0 1712.00 547.55L1712.00 547.55L1709.50 559.75A124.40 124.40 0 0 0 1721.68 562.25L1724.19 550.05A111.96 111.96 0 0 0 1734.38 551.09L1734.38 551.09L1734.38 563.54A124.40 124.40 0 0 0 1746.82 563.54L1746.82 551.09A111.96 111.96 0 0 0 1757.01 550.05L1757.01 550.05L1759.52 562.25A124.40 124.40 0 0 0 1771.70 559.75L1769.20 547.55A111.96 111.96 0 0 0 1778.97 544.48L1778.97 544.48L1783.88 555.93A124.40 124.40 0 0 0 1795.31 551.02L1790.40 539.57A111.96 111.96 0 0 0 1799.36 534.60L1799.36 534.60L1806.47 544.83A124.40 124.40 0 0 0 1816.68 537.72L1809.57 527.50A111.96 111.96 0 0 0 1817.34 520.83L1817.34 520.83L1826.37 529.41A124.40 124.40 0 0 0 1834.94 520.39L1825.91 511.81A111.96 111.96 0 0 0 1832.18 503.71L1832.18 503.71L1842.75 510.30A124.40 124.40 0 0 0 1849.33 499.74L1838.76 493.15A111.96 111.96 0 0 0 1843.27 483.96L1843.27 483.96L1854.95 488.28A124.40 124.40 0 0 0 1859.27 476.62L1847.59 472.29A111.96 111.96 0 0 0 1850.16 462.38L1850.16 462.38L1862.47 464.26A124.40 124.40 0 0 0 1864.35 451.97L1852.04 450.08A111.96 111.96 0 0 0 1852.56 439.85L1852.56 439.85L1865.00 439.22A124.40 124.40 0 0 0 1864.37 426.80L1851.93 427.43A111.96 111.96 0 0 0 1850.38 417.30L1850.38 417.30L1862.44 414.18A124.40 124.40 0 0 0 1859.32 402.14L1847.26 405.26A111.96 111.96 0 0 0 1843.70 395.65L1843.70 395.65L1854.89 390.17A124.40 124.40 0 0 0 1849.41 379.00L1838.22 384.49A111.96 111.96 0 0 0 1832.81 375.79L1832.81 375.79L1842.66 368.17A124.40 124.40 0 0 0 1835.04 358.33L1825.19 365.96A111.96 111.96 0 0 0 1818.13 358.53L1818.13 358.53L1826.25 349.08A124.40 124.40 0 0 0 1816.81 340.98L1808.70 350.43A111.96 111.96 0 0 0 1800.29 344.58L1800.29 344.58L1806.33 333.69A124.40 124.40 0 0 0 1795.46 327.65L1789.41 338.54A111.96 111.96 0 0 0 1780.00 334.50L1780.00 334.50L1783.73 322.62A124.40 124.40 0 0 0 1771.86 318.89L1768.13 330.78A111.96 111.96 0 0 0 1758.10 328.72L1758.10 328.72L1759.36 316.32A124.40 124.40 0 0 0 1746.98 315.06L1745.72 327.46A111.96 111.96 0 0 0 1735.48 327.46Z" fill="#9797e6" stroke="#1c1cc4" stroke-width="1.15"/><rect x="1056.40" y="551.26" width="622.00" height="18.66" fill="#9797e6" stroke="#1c1cc4" stroke-width="1.15"/><circle cx="1740.60" cy="632.12" r="62.20" fill="#9797e6" stroke="#1c1cc4" stroke-width="1.15"/><path d="M1015 204H1906V806H1015Z" fill="none" stroke="#6b6b6b" stroke-width="2"/><path d="M1056 196V204M1056 806V814M1119 196V204M1119 806V814M1181 196V204M1181 806V814M1243 196V204M1243 806V814M1305 196V204M1305 806V814M1367 196V204M1367 806V814M1430 196V204M1430 806V814M1492 196V204M1492 806V814M1554 196V204M1554 806V814M1616 196V204M1616 806V814M1678 196V204M1678 806V814M1741 196V204M1741 806V814M1803 196V204M1803 806V814M1865 196V204M1865 806V814M1007 750H1015M1906 750H1914M1007 688H1015M1906 688H1914M1007 626H1015M1906 626H1914M1007 564H1015M1906 564H1914M1007 502H1015M1906 502H1914M1007 439H1015M1906 439H1914M1007 377H1015M1906 377H1914M1007 315H1015M1906 315H1914M1007 253H1015M1906 253H1914" stroke="#6b6b6b" stroke-width="2"/><path d="M1010 660L1016 665L1010 670Z" fill="#111"/><path d="M1009 810L1015 804L1021 810Z" fill="#111"/></svg>
<div class="t" style="left:1056.5px;top:813px;font-size:13px;color:#111;font-family:'Liberation Sans'">-55</div>
<div class="t" style="left:1119.5px;top:813px;font-size:13px;color:#111;font-family:'Liberation Sans'">-50</div>
<div class="t" style="left:1181.5px;top:813px;font-size:13px;color:#111;font-family:'Liberation Sans'">-45</div>
<div class="t" style="left:1243.5px;top:813px;font-size:13px;color:#111;font-family:'Liberation Sans'">-40</div>
<div class="t" style="left:1305.5px;top:813px;font-size:13px;color:#111;font-family:'Liberation Sans'">-35</div>
<div class="t" style="left:1367.5px;top:813px;font-size:13px;color:#111;font-family:'Liberation Sans'">-30</div>
<div class="t" style="left:1430.5px;top:813px;font-size:13px;color:#111;font-family:'Liberation Sans'">-25</div>
<div class="t" style="left:1492.5px;top:813px;font-size:13px;color:#111;font-family:'Liberation Sans'">-20</div>
<div class="t" style="left:1554.5px;top:813px;font-size:13px;color:#111;font-family:'Liberation Sans'">-15</div>
<div class="t" style="left:1616.5px;top:813px;font-size:13px;color:#111;font-family:'Liberation Sans'">-10</div>
<div class="t" style="left:1678.5px;top:813px;font-size:13px;color:#111;font-family:'Liberation Sans'">-5</div>
<div class="t" style="left:1741.5px;top:813px;font-size:13px;color:#111;font-family:'Liberation Sans'">0</div>
<div class="t" style="left:1803.5px;top:813px;font-size:13px;color:#111;font-family:'Liberation Sans'">5</div>
<div class="t" style="left:1865.5px;top:813px;font-size:13px;color:#111;font-family:'Liberation Sans'">10</div>
<div class="t" style="left:906px;width:100px;text-align:right;top:750px;font-size:13px;color:#111">-25</div>
<div class="t" style="left:906px;width:100px;text-align:right;top:688px;font-size:13px;color:#111">-20</div>
<div class="t" style="left:906px;width:100px;text-align:right;top:625px;font-size:13px;color:#111">-15</div>
<div class="t" style="left:906px;width:100px;text-align:right;top:563px;font-size:13px;color:#111">-10</div>
<div class="t" style="left:906px;width:100px;text-align:right;top:501px;font-size:13px;color:#111">-5</div>
<div class="t" style="left:906px;width:100px;text-align:right;top:439px;font-size:13px;color:#111">0</div>
<div class="t" style="left:906px;width:100px;text-align:right;top:377px;font-size:13px;color:#111">5</div>
<div class="t" style="left:906px;width:100px;text-align:right;top:314px;font-size:13px;color:#111">10</div>
<div class="t" style="left:906px;width:100px;text-align:right;top:252px;font-size:13px;color:#111">15</div>
<div class="t" style="left:1019.6px;top:205px;font-size:13px;color:#111;">mm</div>
<div class="t" style="left:1881px;top:790px;font-size:13px;color:#111;">mm</div>
<svg style="position:absolute;left:1879px;top:208px;" width="22" height="22" viewBox="0 0 22 22"><path d="M2 3.5L15.5 1.5L19 14.5L5.5 17Z" fill="#f0f0f0" stroke="#e0e0e0" stroke-width="0.6"/><defs><radialGradient id="lg2" cx="0.3" cy="0.55" r="0.75"><stop offset="0" stop-color="#f4ec70"/><stop offset="0.35" stop-color="#c8e0a0"/><stop offset="0.6" stop-color="#3f8ad0"/><stop offset="1" stop-color="#102a78"/></radialGradient></defs><rect x="4.5" y="5" width="13.5" height="10.5" rx="2" fill="#13308a"/><rect x="6.2" y="6.2" width="10" height="8" rx="1" fill="url(#lg2)"/></svg>
<div style="position:absolute;left:969px;top:841px;width:67px;height:23px;background:#e8e8e8"></div>
<div class="t" style="left:973.5px;top:848px;font-size:12.6px;color:#1b1b1b;">Messages</div>
<div style="position:absolute;left:1044px;top:841px;width:62px;height:24px;background:#fafbfd;border:1px solid #cfd3da;border-bottom:none;box-sizing:border-box"></div>
<div class="t" style="left:1049px;top:849px;font-size:12.6px;color:#3a5c96;">Progress</div>
<div style="position:absolute;left:1114px;top:841px;width:30px;height:23px;background:#e8e8e8"></div>
<div class="t" style="left:1118.5px;top:848px;font-size:12.6px;color:#1b1b1b;">Log</div>
<div style="position:absolute;left:1152px;top:841px;width:87px;height:23px;background:#e8e8e8"></div>
<div class="t" style="left:1156.5px;top:848px;font-size:12.6px;color:#1b1b1b;">Evaluation 2D</div>
<div style="position:absolute;left:965px;top:864px;width:79px;height:1px;background:#cfd3da"></div>
<div style="position:absolute;left:1106px;top:864px;width:809px;height:1px;background:#cfd3da"></div>
<svg style="position:absolute;left:1889px;top:852px;" width="9" height="5" viewBox="0 0 9 5"><path d="M0 0H9L4.5 5Z" fill="#b9c1cc"/></svg>
<svg style="position:absolute;left:1903px;top:849px;" width="8" height="11" viewBox="0 0 8 11"><rect x="1.5" y="0" width="5" height="6" fill="#b9c1cc"/><rect x="0" y="5.5" width="8" height="1.5" fill="#b9c1cc"/><rect x="3.5" y="7" width="1" height="4" fill="#b9c1cc"/></svg>
<svg style="position:absolute;left:971px;top:873px;" width="17" height="13" viewBox="0 0 17 13"><rect x="0.5" y="0.5" width="14" height="12" fill="#fff" stroke="#777"/><path d="M1 3H14.5M4 3V12.5" stroke="#777"/><path d="M6 8H16" stroke="#3aa040" stroke-width="1.8"/><path d="M5 8L9 5V11Z" fill="#3aa040"/></svg>
<svg style="position:absolute;left:995px;top:873px;" width="16" height="13" viewBox="0 0 16 13"><rect x="0.5" y="0.5" width="15" height="12" fill="#fff" stroke="#777"/><path d="M1 2.5H15" stroke="#777"/><path d="M2.5 5.5H5M2.5 7.5H5M2.5 9.5H5" stroke="#777" stroke-width="0.8"/><rect x="7" y="4" width="7.5" height="7.5" fill="#b81e6b"/></svg>
<svg style="position:absolute;left:1018px;top:878px;" width="7" height="4" viewBox="0 0 7 4"><path d="M0 0H7L3.5 4Z" fill="#111"/></svg>
<svg style="position:absolute;left:1037px;top:872px;" width="17" height="15" viewBox="0 0 17 15"><path d="M0 7H7" stroke="#777" stroke-width="2"/><path d="M7 0V14" stroke="#555" stroke-width="1"/><path d="M8 7H13" stroke="#1a86a8" stroke-width="2.2"/><path d="M12 3L16.5 7L12 11Z" fill="#1a86a8"/></svg>
<svg style="position:absolute;left:1060px;top:878px;" width="7" height="4" viewBox="0 0 7 4"><path d="M0 0H7L3.5 4Z" fill="#111"/></svg>
<div style="position:absolute;left:969px;top:893px;width:942px;height:110px;background:#f9fafd;border:1px solid #cfd3da;box-sizing:border-box"></div>
<div style="position:absolute;left:1893px;top:894px;width:17px;height:108px;background:#efefef"></div>
<div style="position:absolute;left:1893px;top:938px;width:17px;height:25px;background:#cdcdcd"></div>
<svg style="position:absolute;left:1897px;top:902px;" width="9" height="5" viewBox="0 0 9 5"><path d="M0.5 4.5L4.5 0.5L8.5 4.5" fill="none" stroke="#999" stroke-width="1.1"/></svg>
<svg style="position:absolute;left:1897px;top:991px;" width="9" height="5" viewBox="0 0 9 5"><path d="M0.5 0.5L4.5 4.5L8.5 0.5" fill="none" stroke="#999" stroke-width="1.1"/></svg>
<div class="t" style="left:1240px;top:1022px;font-size:12px;color:#111;">725 MB | 2010 MB</div>
<div style="position:absolute;left:1658px;top:1027px;width:1px;height:1px;background:#888"></div></body></html>
